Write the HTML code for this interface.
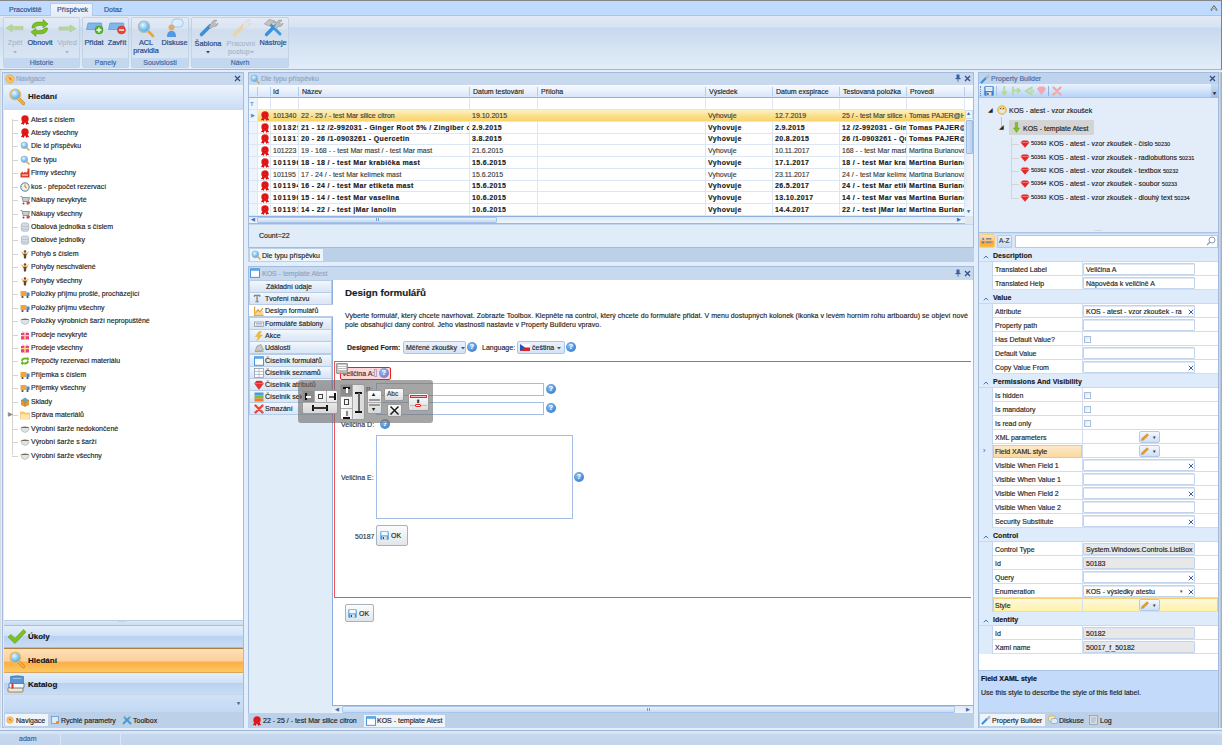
<!DOCTYPE html>
<html><head><meta charset="utf-8">
<style>
*{box-sizing:border-box;margin:0;padding:0}
html,body{width:1222px;height:745px;overflow:hidden}
body{position:relative;-webkit-text-stroke:0.15px currentColor;background:#e2eefb;font-family:"Liberation Sans",sans-serif;font-size:7px;color:#1e1e1e;line-height:1}
.a{position:absolute}
.t{position:absolute;white-space:nowrap}
.b{font-weight:bold}
/* ribbon */
#topline{left:0;top:0;width:1222px;height:1px;background:#878787}
#tabbar{left:0;top:1px;width:1222px;height:14px;background:linear-gradient(#c9d6e6 0,#bfdbff 1px,#bfdbff 100%)}
#ribline{left:0;top:15px;width:1222px;height:1px;background:#a9c6e6}
#ribbody{left:0;top:16px;width:1222px;height:53px;background:linear-gradient(#e1eaf5 0,#d7e3f1 11px,#c8d8ee 12px,#d4e2f2 30px,#e2edf9 53px)}
#ribbot{left:0;top:69px;width:1222px;height:1px;background:#9fb8cc}
.grp{position:absolute;top:17px;height:51px;border:1px solid #c3d3e6;border-radius:2px;background:linear-gradient(#e3ebf6 0,#dae5f3 10px,#d0dded 12px,#d9e5f3 41px)}
.grp .lbl{position:absolute;left:0;right:0;bottom:0;height:9px;background:#c3d7ef;color:#3e64a0;font-size:7px;text-align:center;line-height:9px}
.rb{position:absolute;color:#2a4a85;font-size:7.3px;text-align:center;white-space:nowrap;-webkit-text-stroke:0.2px currentColor}
.rb.dis{color:#a3b5cd;-webkit-text-stroke:0.1px currentColor}
/* panels */
.pnl{position:absolute;border:1px solid #a3bcdd;background:#e1ecf9}
.phdr{position:absolute;left:0;top:0;right:0;height:12px;background:#bacfe8;color:#8aa0bd;font-size:7px;line-height:12px}
</style></head><body>
<svg width="0" height="0" style="position:absolute"><defs>
<radialGradient id="glass" cx="0.4" cy="0.35" r="0.7"><stop offset="0" stop-color="#eaf7ff"/><stop offset="0.45" stop-color="#8fd0f6"/><stop offset="1" stop-color="#3d9ee0"/></radialGradient>
</defs></svg>
<div id="topline" class="a"></div>
<div id="tabbar" class="a"></div>
<div id="ribline" class="a"></div>
<div id="ribbody" class="a"></div>
<div id="ribbot" class="a"></div>
<div class="a" style="left:0;top:70px;width:1222px;height:2px;background:#e4edf8"></div>

<!-- ribbon tabs -->
<div class="a" style="left:50px;top:3px;width:43px;height:13px;border:1px solid #b2cbe8;border-bottom:none;border-radius:2px 2px 0 0;background:linear-gradient(#f3f7fc,#e3ebf6)"></div>
<div class="t" style="left:9px;top:6px;color:#2f4e86">Pracoviště</div>
<div class="t" style="left:57px;top:6px;color:#2f4e86">Příspěvek</div>
<div class="t" style="left:104px;top:6px;color:#2f4e86">Dotaz</div>

<!-- ribbon groups -->
<div class="grp" style="left:3px;width:77px"><div class="lbl">Historie</div></div>
<div class="grp" style="left:82px;width:47px"><div class="lbl">Panely</div></div>
<div class="grp" style="left:131px;width:58px"><div class="lbl">Souvislosti</div></div>
<div class="grp" style="left:191px;width:98px"><div class="lbl">Návrh</div></div>


<!-- ribbon icons -->
<svg class="a" style="left:0;top:15px" width="295" height="40" viewBox="0 15 295 40">
 <!-- Zpet arrow -->
 <path d="M6 28 L12 24.5 V26.6 H23 V29.6 H12 V31.8 Z" fill="#b8d69a" stroke="#a9cb86" stroke-width="0.6"/>
 <!-- Obnovit -->
 <path d="M32 28 C32 22 38 21.5 43 22.5 V19.5 L48 24 L43 28 V25.5 C39 25 36 25.5 34.5 28 Z" fill="#7dc21e" stroke="#5c9a10" stroke-width="0.6"/>
 <path d="M47.5 28 C47.5 34 41 34.5 36 33.5 V36.5 L31 32 L36 28.5 V30.5 C40 31 43.5 30.5 45 28 Z" fill="#7dc21e" stroke="#5c9a10" stroke-width="0.6"/>
 <!-- Vpred -->
 <path d="M76 28.5 L70 25 V27 H59 V30 H70 V32 Z" fill="#b8d69a" stroke="#a9cb86" stroke-width="0.6"/>
 <!-- Pridat -->
 <path d="M86.5 29.5 L88 23 H101.5 L102.5 29.5 Z" fill="#7fb7ea" stroke="#4f8fcf" stroke-width="0.6"/>
 <circle cx="99" cy="30" r="4" fill="#58b32a" stroke="#3f8d1c" stroke-width="0.5"/>
 <path d="M96.5 30 H101.5 M99 27.5 V32.5" stroke="#fff" stroke-width="1.4"/>
 <!-- Zavrit -->
 <path d="M108.5 29.5 L110 23 H123.5 L124.5 29.5 Z" fill="#7fb7ea" stroke="#4f8fcf" stroke-width="0.6"/>
 <circle cx="121.5" cy="30" r="4" fill="#e5453a" stroke="#b8302a" stroke-width="0.5"/>
 <path d="M119 30 H124" stroke="#fff" stroke-width="1.4"/>
 <!-- ACL magnifier -->
 <path d="M148 31 L153 36" stroke="#e8a33a" stroke-width="2.6" stroke-linecap="round"/>
 <circle cx="144" cy="26.7" r="5.6" fill="url(#glass)" stroke="#b9b9b9" stroke-width="1.4"/>
 <!-- Diskuse -->
 <rect x="172" y="19" width="11" height="8" rx="3.5" fill="#dbeeff" stroke="#8ab6de" stroke-width="0.7"/>
 <circle cx="171.5" cy="27.5" r="3" fill="#e4a970"/>
 <path d="M167 37 C167 32 169 31 171.5 31 C174 31 176 32 176 37 Z" fill="#4f9ae0"/>
 <!-- Sablona wrench -->
 <path d="M201.5 34.5 L210 26" stroke="#3f8fd8" stroke-width="3.6" stroke-linecap="round"/>
 <path d="M209 27 L212 22 C213 20 216 19.5 217 20.5 L214.5 22.5 L216 24.5 L218 23 C218 25 216 27 213.5 26.5 L210.5 28.5 Z" fill="#bdbdbd" stroke="#8a8a8a" stroke-width="0.5"/>
 <!-- Pracovni wrench disabled -->
 <path d="M234.5 34.5 L243 26" stroke="#e9d3ab" stroke-width="3.6" stroke-linecap="round"/>
 <path d="M242 27 L245 22 C246 20 249 19.5 250 20.5 L247.5 22.5 L249 24.5 L251 23 C251 25 249 27 246.5 26.5 L243.5 28.5 Z" fill="#e4e4e4" stroke="#cfcfcf" stroke-width="0.5"/>
 <!-- Nastroje -->
 <path d="M280 34 L271 25" stroke="#3f9ad8" stroke-width="3" stroke-linecap="round"/>
 <path d="M264.5 24 L269 19.5 L275 21 L276 23 L272 23 L269.5 26 Z" fill="#c4c4c4" stroke="#7a7a7a" stroke-width="0.5"/>
 <path d="M266.5 34.5 L275 26" stroke="#3f8fd8" stroke-width="3.4" stroke-linecap="round"/>
 <path d="M274 27 L277 22 C278 20 281 19.5 282 20.5 L279.5 22.5 L281 24.5 L283 23 C283 25 281 27 278.5 26.5 L275.5 28.5 Z" fill="#bdbdbd" stroke="#8a8a8a" stroke-width="0.5"/>
</svg>
<div class="rb dis" style="left:5px;top:39px;width:20px">Zpět</div>
<svg class="a" style="left:13px;top:51px" width="4" height="3" viewBox="0 0 4 3"><path d="M0 0 H4 L2 2.5 Z" fill="#a3b5cd"/></svg>
<div class="rb" style="left:26px;top:39px;width:28px">Obnovit</div>
<div class="rb dis" style="left:55px;top:39px;width:24px">Vpřed</div>
<svg class="a" style="left:65px;top:51px" width="4" height="3" viewBox="0 0 4 3"><path d="M0 0 H4 L2 2.5 Z" fill="#a3b5cd"/></svg>
<div class="rb" style="left:83px;top:39px;width:22px">Přidat</div>
<div class="rb" style="left:106px;top:39px;width:22px">Zavřít</div>
<div class="rb" style="left:134px;top:39px;width:24px">ACL</div>
<div class="rb" style="left:132px;top:47px;width:28px">pravidla</div>
<div class="rb" style="left:161px;top:39px;width:27px">Diskuse</div>
<div class="rb" style="left:194px;top:40px;width:28px">Šablona</div>
<svg class="a" style="left:206px;top:51px" width="4" height="3" viewBox="0 0 4 3"><path d="M0 0 H4 L2 2.5 Z" fill="#2a4a85"/></svg>
<div class="rb dis" style="left:226px;top:40px;width:30px">Pracovní</div>
<div class="rb dis" style="left:226px;top:48px;width:30px">postup&nbsp;&nbsp;</div><svg class="a" style="left:250px;top:51px" width="4" height="3" viewBox="0 0 4 3"><path d="M0 0 H4 L2 2.5 Z" fill="#a3b5cd"/></svg>
<div class="rb" style="left:258px;top:39px;width:30px">Nástroje</div>
<svg class="a" style="left:1210px;top:5px" width="8" height="7" viewBox="0 0 8 7"><path d="M1 5.5 L4 1.5 L7 5.5" stroke="#555" stroke-width="1.8" fill="none"/><path d="M1.3 5.3 L4 1.8 L6.7 5.3" stroke="#f4ecc8" stroke-width="0.8" fill="none"/></svg>
<div class="a" style="left:1221px;top:0;width:1px;height:70px;background:#7a828c"></div>

<!-- panels frames -->
<div class="pnl" id="navp" style="left:2px;top:72px;width:242px;height:656px"></div>
<div class="a" style="left:0;top:70px;width:1px;height:661px;background:#d6dce4"></div>
<div class="pnl" id="gridp" style="left:248px;top:72px;width:726px;height:176px"></div>
<div class="pnl" id="formp" style="left:248px;top:266px;width:726px;height:448px"></div>
<div class="pnl" id="propp" style="left:978px;top:72px;width:241px;height:656px"></div>


<!-- NAV PANEL -->
<div class="a" style="left:4px;top:73px;width:239px;height:12px;background:#c8d9ee"></div>
<svg class="a" style="left:5px;top:74px" width="10" height="10" viewBox="0 0 10 10"><circle cx="5" cy="5" r="4.2" fill="#f4c46a" stroke="#e3a43a" stroke-width="0.6"/><path d="M3 3 L7 7 L5.5 4.2 Z" fill="#d42020"/></svg>
<div class="t" style="left:16px;top:75px;color:#8ea5c3">Navigace</div>
<svg class="a" style="left:234px;top:75px" width="7" height="7" viewBox="0 0 7 7"><path d="M1 1 L6 6 M6 1 L1 6" stroke="#2f4e86" stroke-width="1.2"/></svg>
<div class="a" style="left:4px;top:85px;width:239px;height:25px;background:linear-gradient(#eef4fc,#dbe8f9 50%,#c8dcf7)"></div>
<svg class="a" style="left:8px;top:88px" width="18" height="18" viewBox="0 0 18 18"><path d="M10.5 10.5 L15.5 15.5" stroke="#c88a30" stroke-width="3.2" stroke-linecap="round"/><path d="M10.5 10.5 L15.5 15.5" stroke="#f4b040" stroke-width="2" stroke-linecap="round"/><circle cx="7.3" cy="6.5" r="5.3" fill="url(#glass)" stroke="#e8b860" stroke-width="1.4"/></svg>
<div class="t b" style="left:28px;top:93px;font-size:8px;color:#1a1a1a">Hledání</div>
<div class="a" style="left:4px;top:110px;width:239px;height:510px;background:#fff"></div>
<div class="a" style="left:12px;top:119px;width:1px;height:336px;background:#d4d4d4"></div>

<div class="a" style="left:12px;top:120px;width:6px;height:1px;background:#d4d4d4"></div>
<svg class="a" style="left:20px;top:115px" width="10" height="10" viewBox="0 0 10 10"><path d="M3 5.5 L0.8 9.3 L2.6 9 L3.6 10 L5 7 L6.4 10 L7.4 9 L9.2 9.3 L7 5.5 Z" fill="#d81212"/><circle cx="5" cy="4" r="3.7" fill="#e81c1c"/><circle cx="5" cy="4" r="2" fill="none" stroke="#c40e0e" stroke-width="0.7"/></svg>
<div class="t" style="left:31px;top:116px;color:#1e1e1e">Atest s číslem</div>
<div class="a" style="left:12px;top:133px;width:6px;height:1px;background:#d4d4d4"></div>
<svg class="a" style="left:20px;top:128px" width="10" height="10" viewBox="0 0 10 10"><path d="M3 5.5 L0.8 9.3 L2.6 9 L3.6 10 L5 7 L6.4 10 L7.4 9 L9.2 9.3 L7 5.5 Z" fill="#d81212"/><circle cx="5" cy="4" r="3.7" fill="#e81c1c"/><circle cx="5" cy="4" r="2" fill="none" stroke="#c40e0e" stroke-width="0.7"/></svg>
<div class="t" style="left:31px;top:129px;color:#1e1e1e">Atesty všechny</div>
<div class="a" style="left:12px;top:146px;width:6px;height:1px;background:#d4d4d4"></div>
<svg class="a" style="left:20px;top:141px" width="10" height="10" viewBox="0 0 10 10"><path d="M6 6 L9 9" stroke="#e8a33a" stroke-width="1.6" stroke-linecap="round"/><circle cx="4.3" cy="4.3" r="3.3" fill="url(#glass)" stroke="#a9b8c8" stroke-width="0.9"/></svg>
<div class="t" style="left:31px;top:142px;color:#1e1e1e">Dle id příspěvku</div>
<div class="a" style="left:12px;top:160px;width:6px;height:1px;background:#d4d4d4"></div>
<svg class="a" style="left:20px;top:155px" width="10" height="10" viewBox="0 0 10 10"><path d="M6 6 L9 9" stroke="#e8a33a" stroke-width="1.6" stroke-linecap="round"/><circle cx="4.3" cy="4.3" r="3.3" fill="url(#glass)" stroke="#a9b8c8" stroke-width="0.9"/></svg>
<div class="t" style="left:31px;top:156px;color:#1e1e1e">Dle typu</div>
<div class="a" style="left:12px;top:173px;width:6px;height:1px;background:#d4d4d4"></div>
<svg class="a" style="left:20px;top:168px" width="10" height="10" viewBox="0 0 10 10"><path d="M0.5 9.5 V5 L3 3.5 V5 L5.5 3.5 V5 L7.5 3.5 V0.5 H9.5 V9.5 Z" fill="#d8412c"/><rect x="2" y="6.5" width="6" height="1.2" fill="#fbd3c2"/></svg>
<div class="t" style="left:31px;top:169px;color:#1e1e1e">Firmy všechny</div>
<div class="a" style="left:12px;top:187px;width:6px;height:1px;background:#d4d4d4"></div>
<svg class="a" style="left:20px;top:182px" width="10" height="10" viewBox="0 0 10 10"><circle cx="5" cy="5" r="4.2" fill="#fff2c8" stroke="#3b7bc9" stroke-width="1"/><path d="M5 2.5 V5 L6.8 6" stroke="#555" stroke-width="0.7" fill="none"/></svg>
<div class="t" style="left:31px;top:183px;color:#1e1e1e">kos - přepočet rezervací</div>
<div class="a" style="left:12px;top:200px;width:6px;height:1px;background:#d4d4d4"></div>
<svg class="a" style="left:20px;top:195px" width="10" height="10" viewBox="0 0 10 10"><path d="M0.5 1.5 H2 L3 6.5 H8.5 L9.5 2.5 H2.5" fill="#c9cdd2" stroke="#777" stroke-width="0.7"/><circle cx="3.5" cy="8.5" r="1" fill="#555"/><circle cx="7.5" cy="8.5" r="1" fill="#555"/><circle cx="8.3" cy="7.8" r="1.6" fill="#e24b2a"/></svg>
<div class="t" style="left:31px;top:196px;color:#1e1e1e">Nákupy nevykryté</div>
<div class="a" style="left:12px;top:214px;width:6px;height:1px;background:#d4d4d4"></div>
<svg class="a" style="left:20px;top:209px" width="10" height="10" viewBox="0 0 10 10"><path d="M0.5 1.5 H2 L3 6.5 H8.5 L9.5 2.5 H2.5" fill="#c9cdd2" stroke="#777" stroke-width="0.7"/><circle cx="3.5" cy="8.5" r="1" fill="#555"/><circle cx="7.5" cy="8.5" r="1" fill="#555"/><circle cx="8.3" cy="7.8" r="1.6" fill="#e24b2a"/></svg>
<div class="t" style="left:31px;top:210px;color:#1e1e1e">Nákupy všechny</div>
<div class="a" style="left:12px;top:227px;width:6px;height:1px;background:#d4d4d4"></div>
<svg class="a" style="left:20px;top:222px" width="10" height="10" viewBox="0 0 10 10"><rect x="1.3" y="1" width="7.4" height="8.3" rx="2" fill="#d6dde6" stroke="#9aa6b3" stroke-width="0.6"/><path d="M1.5 4 Q5 5.5 8.5 4 M1.5 6.7 Q5 8.2 8.5 6.7" stroke="#9aa6b3" stroke-width="0.5" fill="none"/></svg>
<div class="t" style="left:31px;top:223px;color:#1e1e1e">Obalová jednotka s číslem</div>
<div class="a" style="left:12px;top:240px;width:6px;height:1px;background:#d4d4d4"></div>
<svg class="a" style="left:20px;top:235px" width="10" height="10" viewBox="0 0 10 10"><rect x="1.3" y="1" width="7.4" height="8.3" rx="2" fill="#d6dde6" stroke="#9aa6b3" stroke-width="0.6"/><path d="M1.5 4 Q5 5.5 8.5 4 M1.5 6.7 Q5 8.2 8.5 6.7" stroke="#9aa6b3" stroke-width="0.5" fill="none"/></svg>
<div class="t" style="left:31px;top:236px;color:#1e1e1e">Obalové jednotky</div>
<div class="a" style="left:12px;top:254px;width:6px;height:1px;background:#d4d4d4"></div>
<svg class="a" style="left:20px;top:249px" width="10" height="10" viewBox="0 0 10 10"><path d="M1 2 L4 4.5 L5 3.5 L6 4.5 L9 2 L7 6 H3 Z" fill="#e8a33a"/><path d="M3.5 5 H6.5 L6 9.5 H4 Z" fill="#5a4a35"/><circle cx="5" cy="2.5" r="1.3" fill="#6b5436"/></svg>
<div class="t" style="left:31px;top:250px;color:#1e1e1e">Pohyb s číslem</div>
<div class="a" style="left:12px;top:267px;width:6px;height:1px;background:#d4d4d4"></div>
<svg class="a" style="left:20px;top:262px" width="10" height="10" viewBox="0 0 10 10"><path d="M1 2 L4 4.5 L5 3.5 L6 4.5 L9 2 L7 6 H3 Z" fill="#e8a33a"/><path d="M3.5 5 H6.5 L6 9.5 H4 Z" fill="#5a4a35"/><circle cx="5" cy="2.5" r="1.3" fill="#6b5436"/></svg>
<div class="t" style="left:31px;top:263px;color:#1e1e1e">Pohyby neschválené</div>
<div class="a" style="left:12px;top:281px;width:6px;height:1px;background:#d4d4d4"></div>
<svg class="a" style="left:20px;top:276px" width="10" height="10" viewBox="0 0 10 10"><path d="M1 2 L4 4.5 L5 3.5 L6 4.5 L9 2 L7 6 H3 Z" fill="#e8a33a"/><path d="M3.5 5 H6.5 L6 9.5 H4 Z" fill="#5a4a35"/><circle cx="5" cy="2.5" r="1.3" fill="#6b5436"/></svg>
<div class="t" style="left:31px;top:277px;color:#1e1e1e">Pohyby všechny</div>
<div class="a" style="left:12px;top:294px;width:6px;height:1px;background:#d4d4d4"></div>
<svg class="a" style="left:20px;top:289px" width="10" height="10" viewBox="0 0 10 10"><rect x="0.5" y="2" width="6" height="5" fill="#f2a43a"/><rect x="6.5" y="3.5" width="3" height="3.5" fill="#3e8bd8"/><circle cx="2.5" cy="8" r="1.1" fill="#444"/><circle cx="7.5" cy="8" r="1.1" fill="#444"/></svg>
<div class="t" style="left:31px;top:290px;color:#1e1e1e">Položky příjmu prošlé, procházející</div>
<div class="a" style="left:12px;top:308px;width:6px;height:1px;background:#d4d4d4"></div>
<svg class="a" style="left:20px;top:303px" width="10" height="10" viewBox="0 0 10 10"><rect x="0.5" y="2" width="6" height="5" fill="#f2a43a"/><rect x="6.5" y="3.5" width="3" height="3.5" fill="#3e8bd8"/><circle cx="2.5" cy="8" r="1.1" fill="#444"/><circle cx="7.5" cy="8" r="1.1" fill="#444"/></svg>
<div class="t" style="left:31px;top:304px;color:#1e1e1e">Položky příjmu všechny</div>
<div class="a" style="left:12px;top:321px;width:6px;height:1px;background:#d4d4d4"></div>
<svg class="a" style="left:20px;top:316px" width="10" height="10" viewBox="0 0 10 10"><ellipse cx="5" cy="4" rx="4.2" ry="1.6" fill="#7d6a55"/><path d="M0.8 4 Q1 8 5 8.5 Q9 8 9.2 4" fill="#dfe3e8" stroke="#9aa2ab" stroke-width="0.5"/></svg>
<div class="t" style="left:31px;top:317px;color:#1e1e1e">Položky výrobních šarží nepropuštěné</div>
<div class="a" style="left:12px;top:335px;width:6px;height:1px;background:#d4d4d4"></div>
<svg class="a" style="left:20px;top:330px" width="10" height="10" viewBox="0 0 10 10"><rect x="1" y="3" width="8" height="6.5" fill="#e83e8c"/><rect x="4.3" y="3" width="1.4" height="6.5" fill="#ffe27a"/><rect x="1" y="5" width="8" height="1.2" fill="#ffe27a"/><path d="M5 3 Q2 0 2 2.5 Q3 3 5 3 Q8 0 8 2.5 Q7 3 5 3" fill="#f7b3d3"/></svg>
<div class="t" style="left:31px;top:331px;color:#1e1e1e">Prodeje nevykryté</div>
<div class="a" style="left:12px;top:348px;width:6px;height:1px;background:#d4d4d4"></div>
<svg class="a" style="left:20px;top:343px" width="10" height="10" viewBox="0 0 10 10"><rect x="1" y="3" width="8" height="6.5" fill="#e83e8c"/><rect x="4.3" y="3" width="1.4" height="6.5" fill="#ffe27a"/><rect x="1" y="5" width="8" height="1.2" fill="#ffe27a"/><path d="M5 3 Q2 0 2 2.5 Q3 3 5 3 Q8 0 8 2.5 Q7 3 5 3" fill="#f7b3d3"/></svg>
<div class="t" style="left:31px;top:344px;color:#1e1e1e">Prodeje všechny</div>
<div class="a" style="left:12px;top:361px;width:6px;height:1px;background:#d4d4d4"></div>
<svg class="a" style="left:20px;top:356px" width="10" height="10" viewBox="0 0 10 10"><path d="M1 5 C1 1.5 5 1 7 2 V0.5 L9.5 3 L7 5 V3.8 C5 3.3 3 3.8 2.5 5.5 Z" fill="#6cb82a"/><path d="M9 5 C9 8.5 5 9 3 8 V9.5 L0.5 7 L3 5 V6.2 C5 6.7 7 6.2 7.5 4.5 Z" fill="#6cb82a"/></svg>
<div class="t" style="left:31px;top:357px;color:#1e1e1e">Přepočty rezervací materiálu</div>
<div class="a" style="left:12px;top:375px;width:6px;height:1px;background:#d4d4d4"></div>
<svg class="a" style="left:20px;top:370px" width="10" height="10" viewBox="0 0 10 10"><rect x="0.5" y="2" width="6" height="5" fill="#f2a43a"/><rect x="6.5" y="3.5" width="3" height="3.5" fill="#3e8bd8"/><circle cx="2.5" cy="8" r="1.1" fill="#444"/><circle cx="7.5" cy="8" r="1.1" fill="#444"/></svg>
<div class="t" style="left:31px;top:371px;color:#1e1e1e">Příjemka s číslem</div>
<div class="a" style="left:12px;top:388px;width:6px;height:1px;background:#d4d4d4"></div>
<svg class="a" style="left:20px;top:383px" width="10" height="10" viewBox="0 0 10 10"><rect x="0.5" y="2" width="6" height="5" fill="#f2a43a"/><rect x="6.5" y="3.5" width="3" height="3.5" fill="#3e8bd8"/><circle cx="2.5" cy="8" r="1.1" fill="#444"/><circle cx="7.5" cy="8" r="1.1" fill="#444"/></svg>
<div class="t" style="left:31px;top:384px;color:#1e1e1e">Příjemky všechny</div>
<div class="a" style="left:12px;top:402px;width:6px;height:1px;background:#d4d4d4"></div>
<svg class="a" style="left:20px;top:397px" width="10" height="10" viewBox="0 0 10 10"><path d="M1 3 L5 1 L9 3 V8 L5 9.8 L1 8 Z" fill="#d89a3a"/><path d="M1 3 L5 5 L9 3 M5 5 V9.8" stroke="#a86a1a" stroke-width="0.5" fill="none"/><circle cx="5" cy="2.8" r="2" fill="#5aa6e0"/></svg>
<div class="t" style="left:31px;top:398px;color:#1e1e1e">Sklady</div>
<div class="a" style="left:12px;top:415px;width:6px;height:1px;background:#d4d4d4"></div>
<svg class="a" style="left:20px;top:410px" width="10" height="10" viewBox="0 0 10 10"><path d="M0.5 2 H4 L5 3 H9.5 V9 H0.5 Z" fill="#f7d27a" stroke="#d8a83a" stroke-width="0.5"/><path d="M0.5 4.5 H9.5 V9 H0.5 Z" fill="#fde6a8"/></svg>
<div class="t" style="left:31px;top:411px;color:#1e1e1e">Správa materiálů</div>
<div class="a" style="left:12px;top:429px;width:6px;height:1px;background:#d4d4d4"></div>
<svg class="a" style="left:20px;top:424px" width="10" height="10" viewBox="0 0 10 10"><ellipse cx="5" cy="4" rx="4.2" ry="1.6" fill="#7d6a55"/><path d="M0.8 4 Q1 8 5 8.5 Q9 8 9.2 4" fill="#dfe3e8" stroke="#9aa2ab" stroke-width="0.5"/></svg>
<div class="t" style="left:31px;top:425px;color:#1e1e1e">Výrobní šarže nedokončené</div>
<div class="a" style="left:12px;top:442px;width:6px;height:1px;background:#d4d4d4"></div>
<svg class="a" style="left:20px;top:437px" width="10" height="10" viewBox="0 0 10 10"><ellipse cx="5" cy="4" rx="4.2" ry="1.6" fill="#7d6a55"/><path d="M0.8 4 Q1 8 5 8.5 Q9 8 9.2 4" fill="#dfe3e8" stroke="#9aa2ab" stroke-width="0.5"/></svg>
<div class="t" style="left:31px;top:438px;color:#1e1e1e">Výrobní šarže s šarží</div>
<div class="a" style="left:12px;top:456px;width:6px;height:1px;background:#d4d4d4"></div>
<svg class="a" style="left:20px;top:451px" width="10" height="10" viewBox="0 0 10 10"><ellipse cx="5" cy="4" rx="4.2" ry="1.6" fill="#7d6a55"/><path d="M0.8 4 Q1 8 5 8.5 Q9 8 9.2 4" fill="#dfe3e8" stroke="#9aa2ab" stroke-width="0.5"/></svg>
<div class="t" style="left:31px;top:452px;color:#1e1e1e">Výrobní šarže všechny</div>
<div class="t" style="left:8px;top:411px;color:#888;font-size:6px">▶</div>

<div class="a" style="left:4px;top:620px;width:239px;height:6px;background:linear-gradient(#dce8f6,#cddcef);border-top:1px solid #b8cde6;border-bottom:1px solid #a8c0df"></div>
<div class="t" style="left:118px;top:619px;color:#7f98b8;font-size:5px;letter-spacing:0.5px">····</div>
<div class="a" style="left:4px;top:626px;width:239px;height:22px;background:linear-gradient(#e3eefb 0,#d1e2f7 45%,#b9d2f1 50%,#c9ddf5 100%);border-bottom:1px solid #a0bde0"></div>
<div class="a" style="left:4px;top:648px;width:239px;height:25px;background:linear-gradient(#fde0b8 0,#fcd09a 52%,#fcae4c 58%,#fdc95c 100%);border-top:1px solid #b08040;border-bottom:1px solid #d8a860"></div>
<div class="a" style="left:4px;top:673px;width:239px;height:22px;background:linear-gradient(#e3eefb 0,#d1e2f7 45%,#b9d2f1 50%,#c9ddf5 100%);border-bottom:1px solid #c6d6ea"></div>
<div class="a" style="left:4px;top:695px;width:239px;height:17px;background:linear-gradient(#d0e2f8,#c2d8f3)"></div>
<div class="t" style="left:236px;top:701px;color:#3a5e9a;font-size:5px">▼</div>
<svg class="a" style="left:7px;top:628px" width="20" height="18" viewBox="0 0 20 18"><path d="M1 9 L4 6.5 L8 10.5 L16.5 1.5 L19 4 L8 15.5 Z" fill="#7cc21c" stroke="#5a9a10" stroke-width="0.6"/></svg>
<div class="t b" style="left:28px;top:633px;font-size:8px;color:#111">Úkoly</div>
<svg class="a" style="left:8px;top:651px" width="18" height="18" viewBox="0 0 18 18"><path d="M10.5 10.5 L15.5 15.5" stroke="#c88a30" stroke-width="3.2" stroke-linecap="round"/><path d="M10.5 10.5 L15.5 15.5" stroke="#f4b040" stroke-width="2" stroke-linecap="round"/><circle cx="7.3" cy="6.5" r="5.2" fill="url(#glass)" stroke="#e8b860" stroke-width="1.4"/></svg>
<div class="t b" style="left:28px;top:657px;font-size:8px;color:#111">Hledání</div>
<svg class="a" style="left:7px;top:675px" width="20" height="19" viewBox="0 0 20 19"><rect x="1" y="12.5" width="15" height="4.5" rx="1" fill="#f6e6c4" stroke="#9a6a30" stroke-width="0.8"/><rect x="2" y="8" width="15" height="5" rx="1" fill="#f4f8fb" stroke="#3a6aa8" stroke-width="0.8"/><path d="M3.5 1.5 Q10 0.2 16.5 1.5 V8.5 H3.5 Z" fill="#5a96cf" stroke="#3a6aa0" stroke-width="0.6"/><rect x="6" y="3" width="8" height="1" fill="#9cc4ea"/><rect x="4.5" y="8.5" width="2" height="5" fill="#e03030"/></svg>
<div class="t b" style="left:28px;top:681px;font-size:8px;color:#111">Katalog</div>
<div class="a" style="left:4px;top:712px;width:239px;height:16px;background:#bcd0e8"></div>
<div class="a" style="left:5px;top:714px;width:43px;height:12px;background:#eef4fb"></div>
<svg class="a" style="left:6px;top:716px" width="8" height="8" viewBox="0 0 10 10"><circle cx="5" cy="5" r="4.2" fill="#f4c46a" stroke="#e3a43a" stroke-width="0.6"/><path d="M3 3 L7 7 L5.5 4.2 Z" fill="#d42020"/></svg>
<div class="t" style="left:16px;top:717px;color:#1e1e1e">Navigace</div>
<svg class="a" style="left:51px;top:716px" width="8" height="8" viewBox="0 0 10 10"><rect x="0.5" y="0.5" width="9" height="9" fill="#dbeaf7" stroke="#4a8ac8" stroke-width="0.8"/><circle cx="8" cy="8" r="1.8" fill="#f08a20"/></svg>
<div class="t" style="left:61px;top:717px;color:#1e1e1e">Rychlé parametry</div>
<svg class="a" style="left:122px;top:715px" width="10" height="10" viewBox="0 0 10 10"><path d="M1 9 L8 2 M2 2 L9 9" stroke="#3f9ad8" stroke-width="1.8"/><path d="M1 2 L3 0.5 L4 2 L2 3.5Z M7 1 L9 1.5 L8.5 3.5 L7 3 Z" fill="#aaa"/></svg>
<div class="t" style="left:133px;top:717px;color:#1e1e1e">Toolbox</div>


<!-- GRID PANEL -->
<div class="a" style="left:249px;top:73px;width:724px;height:12px;background:#c8d9ee"></div>
<svg class="a" style="left:250px;top:74px" width="10" height="10" viewBox="0 0 10 10"><path d="M6 6 L9 9" stroke="#e8a33a" stroke-width="1.6" stroke-linecap="round"/><circle cx="4.3" cy="4.3" r="3.4" fill="url(#glass)" stroke="#a9b8c8" stroke-width="0.9"/></svg>
<div class="t" style="left:261px;top:75px;color:#8ea5c3">Dle typu příspěvku</div>
<svg class="a" style="left:955px;top:74px" width="6" height="8" viewBox="0 0 6 8"><rect x="1.5" y="0.5" width="3" height="3.5" fill="#3d5f9e"/><rect x="0.5" y="4" width="5" height="1.2" fill="#3d5f9e"/><path d="M3 5 V7.8" stroke="#3d5f9e" stroke-width="0.8"/></svg>
<svg class="a" style="left:964px;top:75px" width="7" height="7" viewBox="0 0 7 7"><path d="M1 1 L6 6 M6 1 L1 6" stroke="#2f4e86" stroke-width="1.2"/></svg>
<div class="a" style="left:249px;top:85px;width:724px;height:131px;background:#fff"></div>
<div class="a" style="left:249px;top:85px;width:724px;height:13px;background:linear-gradient(#f7fafe,#e9f1fb 50%,#d6e5f8);border-bottom:1px solid #8eb2e0"></div>

<div class="a" style="left:257px;top:87px;width:1px;height:9px;background:#b4cdec"></div>
<div class="a" style="left:270px;top:87px;width:1px;height:9px;background:#b4cdec"></div>
<div class="a" style="left:298px;top:87px;width:1px;height:9px;background:#b4cdec"></div>
<div class="t" style="left:273px;top:88px;color:#1e1e1e">Id</div>
<div class="a" style="left:469px;top:87px;width:1px;height:9px;background:#b4cdec"></div>
<div class="t" style="left:302px;top:88px;color:#1e1e1e">Název</div>
<div class="a" style="left:537px;top:87px;width:1px;height:9px;background:#b4cdec"></div>
<div class="t" style="left:473px;top:88px;color:#1e1e1e">Datum testování</div>
<div class="a" style="left:705px;top:87px;width:1px;height:9px;background:#b4cdec"></div>
<div class="t" style="left:541px;top:88px;color:#1e1e1e">Příloha</div>
<div class="a" style="left:772px;top:87px;width:1px;height:9px;background:#b4cdec"></div>
<div class="t" style="left:709px;top:88px;color:#1e1e1e">Výsledek</div>
<div class="a" style="left:839px;top:87px;width:1px;height:9px;background:#b4cdec"></div>
<div class="t" style="left:776px;top:88px;color:#1e1e1e">Datum exspirace</div>
<div class="a" style="left:906px;top:87px;width:1px;height:9px;background:#b4cdec"></div>
<div class="t" style="left:843px;top:88px;color:#1e1e1e">Testovaná položka</div>
<div class="a" style="left:964px;top:87px;width:1px;height:9px;background:#b4cdec"></div>
<div class="t" style="left:910px;top:88px;color:#1e1e1e">Provedl</div>
<div class="a" style="left:249px;top:98px;width:8px;height:118px;background:#eef4fc"></div>
<div class="t" style="left:250px;top:101px;color:#5a8ac8;font-size:6px">T</div>
<div class="a" style="left:257px;top:98px;width:1px;height:118px;background:#dde7f3"></div>
<div class="a" style="left:270px;top:98px;width:1px;height:118px;background:#dde7f3"></div>
<div class="a" style="left:298px;top:98px;width:1px;height:118px;background:#dde7f3"></div>
<div class="a" style="left:469px;top:98px;width:1px;height:118px;background:#dde7f3"></div>
<div class="a" style="left:537px;top:98px;width:1px;height:118px;background:#dde7f3"></div>
<div class="a" style="left:705px;top:98px;width:1px;height:118px;background:#dde7f3"></div>
<div class="a" style="left:772px;top:98px;width:1px;height:118px;background:#dde7f3"></div>
<div class="a" style="left:839px;top:98px;width:1px;height:118px;background:#dde7f3"></div>
<div class="a" style="left:906px;top:98px;width:1px;height:118px;background:#dde7f3"></div>
<div class="a" style="left:964px;top:98px;width:1px;height:118px;background:#dde7f3"></div>
<div class="a" style="left:249px;top:109px;width:716px;height:1px;background:#dde7f3"></div>
<div class="a" style="left:258px;top:110px;width:707px;height:11px;background:linear-gradient(#fdf0c4,#fbe08e 50%,#f9d46a)"></div>
<div class="t" style="left:251px;top:113px;color:#5a8ac8;font-size:5px">▶</div>
<div class="a" style="left:249px;top:121px;width:716px;height:1px;background:#dde7f3"></div>
<svg class="a" style="left:260px;top:111px" width="10" height="10" viewBox="0 0 10 10"><path d="M3 5.5 L0.8 9.3 L2.6 9 L3.6 10 L5 7 L6.4 10 L7.4 9 L9.2 9.3 L7 5.5 Z" fill="#d81212"/><circle cx="5" cy="4" r="3.7" fill="#e81c1c"/><circle cx="5" cy="4" r="2" fill="none" stroke="#c40e0e" stroke-width="0.7"/></svg>
<div class="a" style="left:273px;top:112px;width:25px;height:9px;overflow:hidden;white-space:nowrap;color:#404040;">101340</div>
<div class="a" style="left:301px;top:112px;width:168px;height:9px;overflow:hidden;white-space:nowrap;color:#404040;">22 - 25 / - test Mar silice citron</div>
<div class="a" style="left:472px;top:112px;width:65px;height:9px;overflow:hidden;white-space:nowrap;color:#404040;">19.10.2015</div>
<div class="a" style="left:708px;top:112px;width:64px;height:9px;overflow:hidden;white-space:nowrap;color:#404040;">Vyhovuje</div>
<div class="a" style="left:775px;top:112px;width:64px;height:9px;overflow:hidden;white-space:nowrap;color:#404040;">12.7.2019</div>
<div class="a" style="left:842px;top:112px;width:64px;height:9px;overflow:hidden;white-space:nowrap;color:#404040;">25 / - test Mar silice citron</div>
<div class="a" style="left:909px;top:112px;width:55px;height:9px;overflow:hidden;white-space:nowrap;color:#404040;">Tomas PAJER@Hutnictví</div>
<div class="a" style="left:249px;top:133px;width:716px;height:1px;background:#dde7f3"></div>
<svg class="a" style="left:260px;top:123px" width="10" height="10" viewBox="0 0 10 10"><path d="M3 5.5 L0.8 9.3 L2.6 9 L3.6 10 L5 7 L6.4 10 L7.4 9 L9.2 9.3 L7 5.5 Z" fill="#d81212"/><circle cx="5" cy="4" r="3.7" fill="#e81c1c"/><circle cx="5" cy="4" r="2" fill="none" stroke="#c40e0e" stroke-width="0.7"/></svg>
<div class="a" style="left:273px;top:124px;width:25px;height:9px;overflow:hidden;white-space:nowrap;color:#1a1a1a;font-weight:bold;letter-spacing:0.9px;">101329</div>
<div class="a" style="left:301px;top:124px;width:168px;height:9px;overflow:hidden;white-space:nowrap;color:#1a1a1a;font-weight:bold;letter-spacing:0.35px;">21 - 12 /2-992031 - Ginger Root 5% / Zingiber officinale</div>
<div class="a" style="left:472px;top:124px;width:65px;height:9px;overflow:hidden;white-space:nowrap;color:#1a1a1a;font-weight:bold;letter-spacing:0.35px;">2.9.2015</div>
<div class="a" style="left:708px;top:124px;width:64px;height:9px;overflow:hidden;white-space:nowrap;color:#1a1a1a;font-weight:bold;letter-spacing:0.35px;">Vyhovuje</div>
<div class="a" style="left:775px;top:124px;width:64px;height:9px;overflow:hidden;white-space:nowrap;color:#1a1a1a;font-weight:bold;letter-spacing:0.35px;">2.9.2015</div>
<div class="a" style="left:842px;top:124px;width:64px;height:9px;overflow:hidden;white-space:nowrap;color:#1a1a1a;font-weight:bold;letter-spacing:0.35px;">12 /2-992031 - Ginger</div>
<div class="a" style="left:909px;top:124px;width:55px;height:9px;overflow:hidden;white-space:nowrap;color:#1a1a1a;font-weight:bold;letter-spacing:0.35px;">Tomas PAJER@Hutnictví</div>
<div class="a" style="left:249px;top:144px;width:716px;height:1px;background:#dde7f3"></div>
<svg class="a" style="left:260px;top:134px" width="10" height="10" viewBox="0 0 10 10"><path d="M3 5.5 L0.8 9.3 L2.6 9 L3.6 10 L5 7 L6.4 10 L7.4 9 L9.2 9.3 L7 5.5 Z" fill="#d81212"/><circle cx="5" cy="4" r="3.7" fill="#e81c1c"/><circle cx="5" cy="4" r="2" fill="none" stroke="#c40e0e" stroke-width="0.7"/></svg>
<div class="a" style="left:273px;top:135px;width:25px;height:9px;overflow:hidden;white-space:nowrap;color:#1a1a1a;font-weight:bold;letter-spacing:0.9px;">101317</div>
<div class="a" style="left:301px;top:135px;width:168px;height:9px;overflow:hidden;white-space:nowrap;color:#1a1a1a;font-weight:bold;letter-spacing:0.35px;">20 - 26 /1-0903261 - Quercetin</div>
<div class="a" style="left:472px;top:135px;width:65px;height:9px;overflow:hidden;white-space:nowrap;color:#1a1a1a;font-weight:bold;letter-spacing:0.35px;">3.8.2015</div>
<div class="a" style="left:708px;top:135px;width:64px;height:9px;overflow:hidden;white-space:nowrap;color:#1a1a1a;font-weight:bold;letter-spacing:0.35px;">Vyhovuje</div>
<div class="a" style="left:775px;top:135px;width:64px;height:9px;overflow:hidden;white-space:nowrap;color:#1a1a1a;font-weight:bold;letter-spacing:0.35px;">20.8.2015</div>
<div class="a" style="left:842px;top:135px;width:64px;height:9px;overflow:hidden;white-space:nowrap;color:#1a1a1a;font-weight:bold;letter-spacing:0.35px;">26 /1-0903261 - Quercetin</div>
<div class="a" style="left:909px;top:135px;width:55px;height:9px;overflow:hidden;white-space:nowrap;color:#1a1a1a;font-weight:bold;letter-spacing:0.35px;">Tomas PAJER@Hutnictví</div>
<div class="a" style="left:249px;top:156px;width:716px;height:1px;background:#dde7f3"></div>
<svg class="a" style="left:260px;top:146px" width="10" height="10" viewBox="0 0 10 10"><path d="M3 5.5 L0.8 9.3 L2.6 9 L3.6 10 L5 7 L6.4 10 L7.4 9 L9.2 9.3 L7 5.5 Z" fill="#d81212"/><circle cx="5" cy="4" r="3.7" fill="#e81c1c"/><circle cx="5" cy="4" r="2" fill="none" stroke="#c40e0e" stroke-width="0.7"/></svg>
<div class="a" style="left:273px;top:147px;width:25px;height:9px;overflow:hidden;white-space:nowrap;color:#404040;">101223</div>
<div class="a" style="left:301px;top:147px;width:168px;height:9px;overflow:hidden;white-space:nowrap;color:#404040;">19 - 168 -  - test Mar mast / - test Mar mast</div>
<div class="a" style="left:472px;top:147px;width:65px;height:9px;overflow:hidden;white-space:nowrap;color:#404040;">21.6.2015</div>
<div class="a" style="left:708px;top:147px;width:64px;height:9px;overflow:hidden;white-space:nowrap;color:#404040;">Vyhovuje</div>
<div class="a" style="left:775px;top:147px;width:64px;height:9px;overflow:hidden;white-space:nowrap;color:#404040;">10.11.2017</div>
<div class="a" style="left:842px;top:147px;width:64px;height:9px;overflow:hidden;white-space:nowrap;color:#404040;">168 -  - test Mar mast</div>
<div class="a" style="left:909px;top:147px;width:55px;height:9px;overflow:hidden;white-space:nowrap;color:#404040;">Martina  Burianová</div>
<div class="a" style="left:249px;top:168px;width:716px;height:1px;background:#dde7f3"></div>
<svg class="a" style="left:260px;top:158px" width="10" height="10" viewBox="0 0 10 10"><path d="M3 5.5 L0.8 9.3 L2.6 9 L3.6 10 L5 7 L6.4 10 L7.4 9 L9.2 9.3 L7 5.5 Z" fill="#d81212"/><circle cx="5" cy="4" r="3.7" fill="#e81c1c"/><circle cx="5" cy="4" r="2" fill="none" stroke="#c40e0e" stroke-width="0.7"/></svg>
<div class="a" style="left:273px;top:159px;width:25px;height:9px;overflow:hidden;white-space:nowrap;color:#1a1a1a;font-weight:bold;letter-spacing:0.9px;">101196</div>
<div class="a" style="left:301px;top:159px;width:168px;height:9px;overflow:hidden;white-space:nowrap;color:#1a1a1a;font-weight:bold;letter-spacing:0.35px;">18 - 18 / - test Mar krabička mast</div>
<div class="a" style="left:472px;top:159px;width:65px;height:9px;overflow:hidden;white-space:nowrap;color:#1a1a1a;font-weight:bold;letter-spacing:0.35px;">15.6.2015</div>
<div class="a" style="left:708px;top:159px;width:64px;height:9px;overflow:hidden;white-space:nowrap;color:#1a1a1a;font-weight:bold;letter-spacing:0.35px;">Vyhovuje</div>
<div class="a" style="left:775px;top:159px;width:64px;height:9px;overflow:hidden;white-space:nowrap;color:#1a1a1a;font-weight:bold;letter-spacing:0.35px;">17.1.2017</div>
<div class="a" style="left:842px;top:159px;width:64px;height:9px;overflow:hidden;white-space:nowrap;color:#1a1a1a;font-weight:bold;letter-spacing:0.35px;">18 / - test Mar krabička</div>
<div class="a" style="left:909px;top:159px;width:55px;height:9px;overflow:hidden;white-space:nowrap;color:#1a1a1a;font-weight:bold;letter-spacing:0.35px;">Martina  Burianová</div>
<div class="a" style="left:249px;top:180px;width:716px;height:1px;background:#dde7f3"></div>
<svg class="a" style="left:260px;top:170px" width="10" height="10" viewBox="0 0 10 10"><path d="M3 5.5 L0.8 9.3 L2.6 9 L3.6 10 L5 7 L6.4 10 L7.4 9 L9.2 9.3 L7 5.5 Z" fill="#d81212"/><circle cx="5" cy="4" r="3.7" fill="#e81c1c"/><circle cx="5" cy="4" r="2" fill="none" stroke="#c40e0e" stroke-width="0.7"/></svg>
<div class="a" style="left:273px;top:171px;width:25px;height:9px;overflow:hidden;white-space:nowrap;color:#404040;">101195</div>
<div class="a" style="left:301px;top:171px;width:168px;height:9px;overflow:hidden;white-space:nowrap;color:#404040;">17 - 24 / - test Mar kelímek mast</div>
<div class="a" style="left:472px;top:171px;width:65px;height:9px;overflow:hidden;white-space:nowrap;color:#404040;">15.6.2015</div>
<div class="a" style="left:708px;top:171px;width:64px;height:9px;overflow:hidden;white-space:nowrap;color:#404040;">Vyhovuje</div>
<div class="a" style="left:775px;top:171px;width:64px;height:9px;overflow:hidden;white-space:nowrap;color:#404040;">23.11.2017</div>
<div class="a" style="left:842px;top:171px;width:64px;height:9px;overflow:hidden;white-space:nowrap;color:#404040;">24 / - test Mar kelímek</div>
<div class="a" style="left:909px;top:171px;width:55px;height:9px;overflow:hidden;white-space:nowrap;color:#404040;">Martina  Burianová</div>
<div class="a" style="left:249px;top:191px;width:716px;height:1px;background:#dde7f3"></div>
<svg class="a" style="left:260px;top:181px" width="10" height="10" viewBox="0 0 10 10"><path d="M3 5.5 L0.8 9.3 L2.6 9 L3.6 10 L5 7 L6.4 10 L7.4 9 L9.2 9.3 L7 5.5 Z" fill="#d81212"/><circle cx="5" cy="4" r="3.7" fill="#e81c1c"/><circle cx="5" cy="4" r="2" fill="none" stroke="#c40e0e" stroke-width="0.7"/></svg>
<div class="a" style="left:273px;top:182px;width:25px;height:9px;overflow:hidden;white-space:nowrap;color:#1a1a1a;font-weight:bold;letter-spacing:0.9px;">101194</div>
<div class="a" style="left:301px;top:182px;width:168px;height:9px;overflow:hidden;white-space:nowrap;color:#1a1a1a;font-weight:bold;letter-spacing:0.35px;">16 - 24 / - test Mar etiketa mast</div>
<div class="a" style="left:472px;top:182px;width:65px;height:9px;overflow:hidden;white-space:nowrap;color:#1a1a1a;font-weight:bold;letter-spacing:0.35px;">15.6.2015</div>
<div class="a" style="left:708px;top:182px;width:64px;height:9px;overflow:hidden;white-space:nowrap;color:#1a1a1a;font-weight:bold;letter-spacing:0.35px;">Vyhovuje</div>
<div class="a" style="left:775px;top:182px;width:64px;height:9px;overflow:hidden;white-space:nowrap;color:#1a1a1a;font-weight:bold;letter-spacing:0.35px;">26.5.2017</div>
<div class="a" style="left:842px;top:182px;width:64px;height:9px;overflow:hidden;white-space:nowrap;color:#1a1a1a;font-weight:bold;letter-spacing:0.35px;">24 / - test Mar etiketa</div>
<div class="a" style="left:909px;top:182px;width:55px;height:9px;overflow:hidden;white-space:nowrap;color:#1a1a1a;font-weight:bold;letter-spacing:0.35px;">Martina  Burianová</div>
<div class="a" style="left:249px;top:203px;width:716px;height:1px;background:#dde7f3"></div>
<svg class="a" style="left:260px;top:193px" width="10" height="10" viewBox="0 0 10 10"><path d="M3 5.5 L0.8 9.3 L2.6 9 L3.6 10 L5 7 L6.4 10 L7.4 9 L9.2 9.3 L7 5.5 Z" fill="#d81212"/><circle cx="5" cy="4" r="3.7" fill="#e81c1c"/><circle cx="5" cy="4" r="2" fill="none" stroke="#c40e0e" stroke-width="0.7"/></svg>
<div class="a" style="left:273px;top:194px;width:25px;height:9px;overflow:hidden;white-space:nowrap;color:#1a1a1a;font-weight:bold;letter-spacing:0.9px;">101190</div>
<div class="a" style="left:301px;top:194px;width:168px;height:9px;overflow:hidden;white-space:nowrap;color:#1a1a1a;font-weight:bold;letter-spacing:0.35px;">15 - 14 / - test Mar vaselina</div>
<div class="a" style="left:472px;top:194px;width:65px;height:9px;overflow:hidden;white-space:nowrap;color:#1a1a1a;font-weight:bold;letter-spacing:0.35px;">10.6.2015</div>
<div class="a" style="left:708px;top:194px;width:64px;height:9px;overflow:hidden;white-space:nowrap;color:#1a1a1a;font-weight:bold;letter-spacing:0.35px;">Vyhovuje</div>
<div class="a" style="left:775px;top:194px;width:64px;height:9px;overflow:hidden;white-space:nowrap;color:#1a1a1a;font-weight:bold;letter-spacing:0.35px;">13.10.2017</div>
<div class="a" style="left:842px;top:194px;width:64px;height:9px;overflow:hidden;white-space:nowrap;color:#1a1a1a;font-weight:bold;letter-spacing:0.35px;">14 / - test Mar vaselina</div>
<div class="a" style="left:909px;top:194px;width:55px;height:9px;overflow:hidden;white-space:nowrap;color:#1a1a1a;font-weight:bold;letter-spacing:0.35px;">Martina  Burianová</div>
<div class="a" style="left:249px;top:215px;width:716px;height:1px;background:#dde7f3"></div>
<svg class="a" style="left:260px;top:205px" width="10" height="10" viewBox="0 0 10 10"><path d="M3 5.5 L0.8 9.3 L2.6 9 L3.6 10 L5 7 L6.4 10 L7.4 9 L9.2 9.3 L7 5.5 Z" fill="#d81212"/><circle cx="5" cy="4" r="3.7" fill="#e81c1c"/><circle cx="5" cy="4" r="2" fill="none" stroke="#c40e0e" stroke-width="0.7"/></svg>
<div class="a" style="left:273px;top:206px;width:25px;height:9px;overflow:hidden;white-space:nowrap;color:#1a1a1a;font-weight:bold;letter-spacing:0.9px;">101191</div>
<div class="a" style="left:301px;top:206px;width:168px;height:9px;overflow:hidden;white-space:nowrap;color:#1a1a1a;font-weight:bold;letter-spacing:0.35px;">14 - 22 / - test |Mar lanolin</div>
<div class="a" style="left:472px;top:206px;width:65px;height:9px;overflow:hidden;white-space:nowrap;color:#1a1a1a;font-weight:bold;letter-spacing:0.35px;">10.6.2015</div>
<div class="a" style="left:708px;top:206px;width:64px;height:9px;overflow:hidden;white-space:nowrap;color:#1a1a1a;font-weight:bold;letter-spacing:0.35px;">Vyhovuje</div>
<div class="a" style="left:775px;top:206px;width:64px;height:9px;overflow:hidden;white-space:nowrap;color:#1a1a1a;font-weight:bold;letter-spacing:0.35px;">14.4.2017</div>
<div class="a" style="left:842px;top:206px;width:64px;height:9px;overflow:hidden;white-space:nowrap;color:#1a1a1a;font-weight:bold;letter-spacing:0.35px;">22 / - test |Mar lanolin</div>
<div class="a" style="left:909px;top:206px;width:55px;height:9px;overflow:hidden;white-space:nowrap;color:#1a1a1a;font-weight:bold;letter-spacing:0.35px;">Martina  Burianová</div>

<div class="a" style="left:965px;top:110px;width:8px;height:106px;background:linear-gradient(90deg,#e3ecf7,#f3f7fc)"></div>
<div class="a" style="left:965px;top:110px;width:8px;height:9px;background:#eef4fb;border:1px solid #c9d9ee"></div>
<div class="t" style="left:966px;top:111px;color:#3a6ab0;font-size:5px">▲</div>
<div class="a" style="left:966px;top:120px;width:7px;height:34px;background:linear-gradient(90deg,#cfe0f6,#b9d1f1);border:1px solid #9bbbe4;border-radius:1px"></div>
<div class="a" style="left:965px;top:207px;width:8px;height:9px;background:#eef4fb"></div>
<div class="t" style="left:966px;top:209px;color:#3a6ab0;font-size:5px">▼</div>
<div class="a" style="left:249px;top:216px;width:716px;height:8px;background:linear-gradient(#dde9f8,#eef5fd);border-top:1px solid #8fb0dc;border-bottom:1px solid #9ab8e0"></div>
<div class="t" style="left:251px;top:217px;color:#3a6ab0;font-size:5px">◀</div>
<div class="a" style="left:257px;top:217px;width:240px;height:6px;background:linear-gradient(#eaf2fc,#c6dbf5);border:1px solid #a9c6ea;border-radius:1px"></div>
<div class="a" style="left:376px;top:218px;width:3px;height:3px;border-left:1px solid #7a9cc8;border-right:1px solid #7a9cc8"></div>
<div class="a" style="left:965px;top:216px;width:8px;height:8px;background:#dfe6ee"></div>
<div class="t" style="left:957px;top:217px;color:#3a6ab0;font-size:5px">▶</div>
<div class="a" style="left:249px;top:224px;width:724px;height:23px;background:#e1ecf9;border-top:1px solid #c3d6ee"></div>
<div class="t" style="left:259px;top:232px;color:#1e1e1e">Count=22</div>
<div class="a" style="left:248px;top:248px;width:726px;height:14px;background:#bcd0e8"></div>
<div class="a" style="left:250px;top:249px;width:73px;height:12px;background:#eef4fb"></div>
<svg class="a" style="left:251px;top:250px" width="10" height="10" viewBox="0 0 10 10"><path d="M6 6 L9 9" stroke="#e8a33a" stroke-width="1.6" stroke-linecap="round"/><circle cx="4.3" cy="4.3" r="3.4" fill="url(#glass)" stroke="#a9b8c8" stroke-width="0.9"/></svg>
<div class="t" style="left:262px;top:252px;color:#1e1e1e">Dle typu příspěvku</div>


<!-- FORM PANEL -->
<div class="a" style="left:249px;top:267px;width:724px;height:13px;background:#c8d9ee"></div>
<svg class="a" style="left:250px;top:268px" width="10" height="10" viewBox="0 0 10 10"><rect x="0.5" y="0.8" width="9" height="8.5" fill="#fff" stroke="#3a8ad8" stroke-width="0.9"/><rect x="0.5" y="0.8" width="9" height="2" fill="#5aa6e8"/></svg>
<div class="t" style="left:262px;top:270px;color:#8ea5c3">KOS - template Atest</div>
<svg class="a" style="left:955px;top:269px" width="6" height="8" viewBox="0 0 6 8"><rect x="1.5" y="0.5" width="3" height="3.5" fill="#3d5f9e"/><rect x="0.5" y="4" width="5" height="1.2" fill="#3d5f9e"/><path d="M3 5 V7.8" stroke="#3d5f9e" stroke-width="0.8"/></svg>
<svg class="a" style="left:964px;top:270px" width="7" height="7" viewBox="0 0 7 7"><path d="M1 1 L6 6 M6 1 L1 6" stroke="#2f4e86" stroke-width="1.2"/></svg>
<div class="a" style="left:249px;top:280px;width:83px;height:426px;background:#e1ecf9"></div>
<div class="a" style="left:332px;top:280px;width:641px;height:426px;background:#fff;border-left:1px solid #8eaedb"></div>

<div class="a" style="left:249px;top:280px;width:83px;height:13px;background:linear-gradient(#f4f8fd,#e4edf8 50%,#d9e6f6);border:1px solid #b7cce6"></div>
<div class="t" style="left:266px;top:283px;color:#1e1e1e">Základní údaje</div>
<div class="a" style="left:249px;top:292px;width:83px;height:13px;background:linear-gradient(#f4f8fd,#e4edf8 50%,#d9e6f6);border:1px solid #b7cce6"></div>
<div class="t" style="left:254px;top:294px;font-family:Liberation Serif;font-size:10px;color:#fff;-webkit-text-stroke:0.6px #777">T</div>
<div class="t" style="left:265px;top:295px;color:#1e1e1e">Tvoření názvu</div>
<div class="a" style="left:249px;top:304px;width:84px;height:13px;background:#fff;border-top:1px solid #b7cce6;border-bottom:1px solid #b7cce6"></div>
<svg class="a" style="left:254px;top:306px" width="10" height="10" viewBox="0 0 10 10"><path d="M0.5 0.5 V9.5 H9.5" stroke="#e8a030" stroke-width="1.4" fill="none"/><path d="M1.5 7 L4 4 L6 6 L9 2" stroke="#d89020" stroke-width="1.2" fill="none"/><rect x="0.5" y="5" width="9" height="4.5" fill="#f4c060" opacity="0.6"/></svg>
<div class="t" style="left:265px;top:307px;color:#1e1e1e">Design formulářů</div>
<div class="a" style="left:249px;top:317px;width:83px;height:13px;background:linear-gradient(#f4f8fd,#e4edf8 50%,#d9e6f6);border:1px solid #b7cce6"></div>
<svg class="a" style="left:254px;top:319px" width="10" height="10" viewBox="0 0 10 10"><rect x="0.5" y="3" width="9" height="4.5" fill="#e8eef5" stroke="#7d8ea3" stroke-width="0.7"/><path d="M2 4.5 H8 M2 6 H8" stroke="#7d8ea3" stroke-width="0.5"/></svg>
<div class="t" style="left:265px;top:320px;color:#1e1e1e">Formuláře šablony</div>
<div class="a" style="left:249px;top:329px;width:83px;height:13px;background:linear-gradient(#f4f8fd,#e4edf8 50%,#d9e6f6);border:1px solid #b7cce6"></div>
<svg class="a" style="left:254px;top:331px" width="10" height="10" viewBox="0 0 10 10"><path d="M5 0.5 L1.5 5.5 H4.5 L3 9.5 L8.5 4 H5.5 L7.5 0.5 Z" fill="#f5c030" stroke="#d89a10" stroke-width="0.4"/></svg>
<div class="t" style="left:265px;top:332px;color:#1e1e1e">Akce</div>
<div class="a" style="left:249px;top:341px;width:83px;height:13px;background:linear-gradient(#f4f8fd,#e4edf8 50%,#d9e6f6);border:1px solid #b7cce6"></div>
<svg class="a" style="left:254px;top:343px" width="10" height="10" viewBox="0 0 10 10"><path d="M1 8.5 L3 3 L7 1.5 L9.5 7 Z" fill="#c9c9c9" stroke="#7a7a7a" stroke-width="0.5"/><path d="M1 8.5 H9.5" stroke="#d8a040" stroke-width="1.2"/></svg>
<div class="t" style="left:265px;top:344px;color:#1e1e1e">Události</div>
<div class="a" style="left:249px;top:354px;width:83px;height:13px;background:linear-gradient(#f4f8fd,#e4edf8 50%,#d9e6f6);border:1px solid #b7cce6"></div>
<svg class="a" style="left:254px;top:356px" width="10" height="10" viewBox="0 0 10 10"><rect x="0.5" y="0.8" width="9" height="8.5" fill="#fff" stroke="#3a8ad8" stroke-width="0.9"/><rect x="0.5" y="0.8" width="9" height="2" fill="#5aa6e8"/></svg>
<div class="t" style="left:265px;top:357px;color:#1e1e1e">Číselník formulářů</div>
<div class="a" style="left:249px;top:366px;width:83px;height:13px;background:linear-gradient(#f4f8fd,#e4edf8 50%,#d9e6f6);border:1px solid #b7cce6"></div>
<svg class="a" style="left:254px;top:368px" width="10" height="10" viewBox="0 0 10 10"><rect x="0.5" y="0.5" width="9" height="9" fill="#fff" stroke="#7d8ea3" stroke-width="0.7"/><path d="M5 0.5 V9.5 M0.5 3.5 H9.5 M0.5 6.5 H9.5" stroke="#7d8ea3" stroke-width="0.5"/></svg>
<div class="t" style="left:265px;top:369px;color:#1e1e1e">Číselník seznamů</div>
<div class="a" style="left:249px;top:378px;width:83px;height:13px;background:linear-gradient(#f4f8fd,#e4edf8 50%,#d9e6f6);border:1px solid #b7cce6"></div>
<svg class="a" style="left:254px;top:380px" width="10" height="10" viewBox="0 0 10 10"><path d="M0.5 3.5 L2.5 1 H7.5 L9.5 3.5 L5 9.5 Z" fill="#e83030" stroke="#b81818" stroke-width="0.4"/><path d="M0.5 3.5 H9.5" stroke="#ff9090" stroke-width="0.6"/></svg>
<div class="t" style="left:265px;top:381px;color:#1e1e1e">Číselník atributů</div>
<div class="a" style="left:249px;top:390px;width:83px;height:13px;background:linear-gradient(#f4f8fd,#e4edf8 50%,#d9e6f6);border:1px solid #b7cce6"></div>
<svg class="a" style="left:254px;top:392px" width="10" height="10" viewBox="0 0 10 10"><rect x="0.5" y="0.5" width="9" height="3" fill="#4a9ae0"/><rect x="0.5" y="3.5" width="9" height="3" fill="#7cc040"/><rect x="0.5" y="6.5" width="9" height="3" fill="#f07a30"/></svg>
<div class="t" style="left:265px;top:393px;color:#1e1e1e">Číselník sekcí</div>
<div class="a" style="left:249px;top:402px;width:83px;height:13px;background:linear-gradient(#f4f8fd,#e4edf8 50%,#d9e6f6);border:1px solid #b7cce6"></div>
<svg class="a" style="left:254px;top:404px" width="10" height="10" viewBox="0 0 10 10"><path d="M1.5 1.5 L8.5 8.5 M8.5 1.5 L1.5 8.5" stroke="#e8483a" stroke-width="2.4" stroke-linecap="round"/></svg>
<div class="t" style="left:265px;top:405px;color:#1e1e1e">Smazání</div>

<div class="t b" style="left:345px;top:288px;font-size:9.8px;color:#1a1a1a">Design formulářů</div>
<div class="t" style="left:345px;top:312px;color:#1e1e1e;letter-spacing:0.05px">Vyberte formulář, který chcete navrhovat. Zobrazte Toolbox. Klepněte na control, který chcete do formuláře přidat. V menu dostupných kolonek (ikonka v levém horním rohu artboardu) se objeví nové</div>
<div class="t" style="left:345px;top:321px;color:#1e1e1e;letter-spacing:0.05px">pole obsahující daný control. Jeho vlastnosti nastavte v Property Builderu vpravo.</div>
<div class="t b" style="left:347px;top:344px;color:#1a1a1a">Designed Form:</div>
<div class="a" style="left:403px;top:341px;width:63px;height:13px;background:linear-gradient(#eaf2fc,#d2e3f8);border:1px solid #a9c4e8;border-radius:2px"></div>
<div class="t" style="left:406px;top:344px;color:#1e1e1e">Měřené zkoušky</div>
<svg class="a" style="left:461px;top:347px" width="4" height="3" viewBox="0 0 4 3"><path d="M0 0 H4 L2 2.5 Z" fill="#555"/></svg>
<div class="t" style="left:482px;top:344px;color:#1e1e1e">Language:</div>
<div class="a" style="left:517px;top:341px;width:48px;height:13px;background:linear-gradient(#eaf2fc,#d2e3f8);border:1px solid #a9c4e8;border-radius:2px"></div>
<svg class="a" style="left:520px;top:344px" width="10" height="7" viewBox="0 0 10 7"><rect width="10" height="3.5" fill="#fff"/><rect y="3.5" width="10" height="3.5" fill="#d8252a"/><path d="M0 0 L5 3.5 L0 7 Z" fill="#1d5ab8"/></svg>
<div class="t" style="left:532px;top:344px;color:#1e1e1e">čeština</div>
<svg class="a" style="left:557px;top:347px" width="4" height="3" viewBox="0 0 4 3"><path d="M0 0 H4 L2 2.5 Z" fill="#555"/></svg>
<!-- design area -->
<div class="a" style="left:334px;top:361px;width:637px;height:237px;border:1px solid #f05050;border-right:none"></div>
<div class="a" style="left:340px;top:367px;width:51px;height:13px;background:#fcd8d8;border:1.5px solid #e82020;border-radius:2px"></div>
<div class="t" style="left:342px;top:370px;color:#333">Veličina A:</div>
<div class="a" style="left:374px;top:369px;width:3px;height:8px;border:1px solid #b9a3c8"></div>
<div class="a" style="left:336px;top:363px;width:12px;height:11px;background:#b9b9b9;border:1px solid #8c8c8c;border-radius:1px;opacity:0.9"></div>
<div class="a" style="left:338px;top:365px;width:8px;height:1px;background:#fff;box-shadow:0 2px 0 #fff,0 4px 0 #fff"></div>
<div class="a" style="left:376px;top:383px;width:168px;height:13px;border:1px solid #a3bde3;background:#fff"></div>
<div class="t" style="left:366px;top:386px;color:#333">B:</div>
<div class="a" style="left:376px;top:402px;width:168px;height:13px;border:1px solid #a3bde3;background:#fff"></div>
<div class="t" style="left:341px;top:421px;color:#333">Veličina D:</div>
<div class="a" style="left:376px;top:435px;width:197px;height:84px;border:1px solid #a3bde3;background:#fff"></div>
<div class="t" style="left:341px;top:474px;color:#333">Veličina E:</div>
<div class="t" style="left:355px;top:533px;color:#333">50187</div>
<div class="a" style="left:376px;top:525px;width:32px;height:21px;background:linear-gradient(#fbfcfd,#e1e5ea);border:1px solid #a8b2bd;border-radius:2px"></div>
<svg class="a" style="left:380px;top:531px" width="9" height="9" viewBox="0 0 9 9"><rect x="0.3" y="0.3" width="8.4" height="8.4" rx="0.8" fill="#4a9ae0"/><rect x="1.3" y="0.8" width="6.4" height="3.6" fill="#f4f8fc"/><rect x="2.2" y="5.3" width="4.6" height="3.4" fill="#d8e2ec"/><rect x="2.9" y="6" width="1.1" height="2" fill="#345"/></svg>
<div class="t" style="left:391px;top:532px;color:#222">OK</div>
<div class="a" style="left:345px;top:604px;width:29px;height:18px;background:linear-gradient(#fbfcfd,#e1e5ea);border:1px solid #a8b2bd;border-radius:2px"></div>
<svg class="a" style="left:348px;top:609px" width="9" height="9" viewBox="0 0 9 9"><rect x="0.3" y="0.3" width="8.4" height="8.4" rx="0.8" fill="#4a9ae0"/><rect x="1.3" y="0.8" width="6.4" height="3.6" fill="#f4f8fc"/><rect x="2.2" y="5.3" width="4.6" height="3.4" fill="#d8e2ec"/><rect x="2.9" y="6" width="1.1" height="2" fill="#345"/></svg>
<div class="t" style="left:359px;top:610px;color:#222">OK</div>

<div class="a" style="left:467px;top:342px;width:10px;height:10px;border-radius:50%;background:radial-gradient(circle at 40% 35%,#8fc0f0,#3d86d6 70%);color:#fff;font-size:7px;font-weight:bold;text-align:center;line-height:10px">?</div>
<div class="a" style="left:566px;top:342px;width:10px;height:10px;border-radius:50%;background:radial-gradient(circle at 40% 35%,#8fc0f0,#3d86d6 70%);color:#fff;font-size:7px;font-weight:bold;text-align:center;line-height:10px">?</div>
<div class="a" style="left:379px;top:368px;width:10px;height:10px;border-radius:50%;background:radial-gradient(circle at 40% 35%,#8fc0f0,#7d7fc8 70%);color:#fff;font-size:7px;font-weight:bold;text-align:center;line-height:10px">?</div>
<div class="a" style="left:546px;top:384px;width:10px;height:10px;border-radius:50%;background:radial-gradient(circle at 40% 35%,#8fc0f0,#3d86d6 70%);color:#fff;font-size:7px;font-weight:bold;text-align:center;line-height:10px">?</div>
<div class="a" style="left:546px;top:403px;width:10px;height:10px;border-radius:50%;background:radial-gradient(circle at 40% 35%,#8fc0f0,#3d86d6 70%);color:#fff;font-size:7px;font-weight:bold;text-align:center;line-height:10px">?</div>
<div class="a" style="left:380px;top:419px;width:10px;height:10px;border-radius:50%;background:radial-gradient(circle at 40% 35%,#8fc0f0,#3d86d6 70%);color:#fff;font-size:7px;font-weight:bold;text-align:center;line-height:10px">?</div>
<div class="a" style="left:574px;top:472px;width:10px;height:10px;border-radius:50%;background:radial-gradient(circle at 40% 35%,#8fc0f0,#3d86d6 70%);color:#fff;font-size:7px;font-weight:bold;text-align:center;line-height:10px">?</div>

<!-- toolbox overlay -->
<div class="a" style="left:298px;top:380px;width:135px;height:43px;background:rgba(110,110,110,0.62);border-radius:3px"></div>
<div class="a" style="left:302px;top:390px;width:36px;height:24px;background:linear-gradient(#fdfdfd,#d8d8d8);border-radius:2px;border:1px solid #9a9a9a"></div>
<div class="a" style="left:303px;top:391px;width:11px;height:11px;background:#8c8c8c"></div>
<div class="a" style="left:314px;top:391px;width:1px;height:11px;background:#aaa"></div>
<div class="a" style="left:326px;top:391px;width:1px;height:11px;background:#aaa"></div>
<div class="a" style="left:303px;top:402px;width:34px;height:1px;background:#aaa"></div>
<div class="a" style="left:305px;top:393px;width:1.5px;height:7px;background:#111"></div>
<div class="a" style="left:306px;top:396px;width:5px;height:1.5px;background:#fff"></div>
<div class="a" style="left:318px;top:394px;width:5px;height:5px;border:1px dashed #444"></div>
<div class="a" style="left:334px;top:393px;width:1.5px;height:7px;background:#111"></div>
<div class="a" style="left:329px;top:396px;width:5px;height:1.5px;background:#666"></div>
<div class="a" style="left:312px;top:405px;width:1.5px;height:6px;background:#111"></div>
<div class="a" style="left:326px;top:405px;width:1.5px;height:6px;background:#111"></div>
<div class="a" style="left:313px;top:407px;width:14px;height:2px;border-top:1px solid #333;border-bottom:1px solid #333"></div>
<div class="a" style="left:340px;top:384px;width:25px;height:36px;background:linear-gradient(90deg,#fdfdfd,#d8d8d8);border-radius:2px;border:1px solid #9a9a9a"></div>
<div class="a" style="left:341px;top:385px;width:11px;height:11px;background:#8c8c8c"></div>
<div class="a" style="left:352px;top:385px;width:1px;height:34px;background:#aaa"></div>
<div class="a" style="left:341px;top:396px;width:11px;height:1px;background:#aaa"></div>
<div class="a" style="left:341px;top:408px;width:11px;height:1px;background:#aaa"></div>
<div class="a" style="left:343px;top:387px;width:7px;height:1.5px;background:#111"></div>
<div class="a" style="left:345.5px;top:388px;width:2px;height:5px;background:#fff"></div>
<div class="a" style="left:343px;top:417px;width:7px;height:1.5px;background:#111"></div>
<div class="a" style="left:345.5px;top:411px;width:2px;height:5px;border:0.5px solid #888"></div>
<div class="a" style="left:344px;top:399px;width:5px;height:6px;border:1px dashed #444"></div>
<div class="a" style="left:355px;top:392px;width:7px;height:1.5px;background:#111"></div>
<div class="a" style="left:357.5px;top:393px;width:2px;height:18px;border:0.5px solid #666"></div>
<div class="a" style="left:355px;top:411px;width:7px;height:1.5px;background:#111"></div>
<div class="a" style="left:367px;top:390px;width:15px;height:24px;background:linear-gradient(#fdfdfd,#d8d8d8);border-radius:2px;border:1px solid #9a9a9a"></div>
<div class="a" style="left:367px;top:402px;width:15px;height:1px;background:#aaa"></div>
<div class="t" style="left:372px;top:391px;color:#111;font-size:6px">▴</div>
<div class="a" style="left:369px;top:399px;width:11px;height:2px;border:0.5px solid #999;background:#fff"></div>
<div class="a" style="left:369px;top:404px;width:11px;height:2px;border:0.5px solid #999;background:#fff"></div>
<div class="t" style="left:372px;top:406px;color:#111;font-size:6px">▾</div>
<div class="a" style="left:384px;top:388px;width:20px;height:13px;background:linear-gradient(#fdfdfd,#dcdcdc);border-radius:2px;border:1px solid #9a9a9a"></div>
<div class="t" style="left:387px;top:391px;color:#333;font-size:6.5px">Abc</div>
<div class="a" style="left:387px;top:404px;width:15px;height:13px;background:linear-gradient(#fdfdfd,#dcdcdc);border-radius:2px;border:1px solid #9a9a9a"></div>
<svg class="a" style="left:389px;top:405px" width="11" height="11" viewBox="0 0 11 11"><path d="M1.5 1.5 L9.5 9.5 M9.5 1.5 L1.5 9.5" stroke="#111" stroke-width="1.4"/></svg>
<div class="a" style="left:408px;top:393px;width:21px;height:18px;background:linear-gradient(#fdfdfd,#dcdcdc);border-radius:2px;border:1px solid #9a9a9a"></div>
<div class="a" style="left:410px;top:395px;width:17px;height:3px;border:1px solid #e02828;background:#f7c0c0"></div>
<div class="t" style="left:416px;top:399px;color:#111;font-size:5px">⬍</div>
<div class="a" style="left:410px;top:405px;width:17px;height:1px;background:#bbb"></div>
<div class="a" style="left:415px;top:404px;width:6px;height:3px;border:1px solid #e02828;border-radius:1px;background:#fff"></div>
<!-- form scrollbar + tabs -->
<div class="a" style="left:332px;top:705px;width:641px;height:8px;background:linear-gradient(#dde9f8,#eef5fd);border-top:1px solid #8fb0dc"></div>
<div class="t" style="left:335px;top:707px;color:#3a6ab0;font-size:5px">◀</div>
<div class="a" style="left:342px;top:706px;width:613px;height:7px;background:linear-gradient(#eaf2fc,#c6dbf5);border:1px solid #a9c6ea;border-radius:1px"></div>
<div class="a" style="left:647px;top:708px;width:3px;height:3px;border-left:1px solid #7a9cc8;border-right:1px solid #7a9cc8"></div>
<div class="t" style="left:966px;top:707px;color:#3a6ab0;font-size:5px">▶</div>
<div class="a" style="left:249px;top:706px;width:83px;height:7px;background:#e1ecf9"></div>
<div class="a" style="left:248px;top:713px;width:726px;height:15px;background:#bcd0e8"></div>
<svg class="a" style="left:252px;top:716px" width="10" height="10" viewBox="0 0 10 10"><path d="M3 5.5 L0.8 9.3 L2.6 9 L3.6 10 L5 7 L6.4 10 L7.4 9 L9.2 9.3 L7 5.5 Z" fill="#d81212"/><circle cx="5" cy="4" r="3.7" fill="#e81c1c"/><circle cx="5" cy="4" r="2" fill="none" stroke="#c40e0e" stroke-width="0.7"/></svg>
<div class="t" style="left:263px;top:717px;color:#1e1e1e">22 - 25 / - test Mar silice citron</div>
<div class="a" style="left:364px;top:715px;width:81px;height:12px;background:#eef4fb"></div>
<svg class="a" style="left:366px;top:716px" width="10" height="10" viewBox="0 0 10 10"><rect x="0.5" y="0.8" width="9" height="8.5" fill="#fff" stroke="#3a8ad8" stroke-width="0.9"/><rect x="0.5" y="0.8" width="9" height="2" fill="#5aa6e8"/></svg>
<div class="t" style="left:377px;top:717px;color:#1e1e1e">KOS - template Atest</div>


<!-- PROPERTY PANEL -->
<div class="a" style="left:979px;top:73px;width:239px;height:11px;background:#bfd3ec"></div>
<svg class="a" style="left:980px;top:74px" width="10" height="10" viewBox="0 0 10 10"><path d="M1.5 8.5 L6 4" stroke="#3f8fd8" stroke-width="2.2" stroke-linecap="round"/><path d="M5.5 4.5 L7 1.5 C7.5 0.8 9 0.6 9.5 1 L8.3 2.2 L9 3 L9.8 2.3 C9.8 3.5 8.8 4.2 7.5 4 L6.5 5 Z" fill="#b8b8b8"/></svg>
<div class="t" style="left:991px;top:75px;color:#4a6aa0">Property Builder</div>
<svg class="a" style="left:1209px;top:75px" width="7" height="7" viewBox="0 0 7 7"><path d="M1 1 L6 6 M6 1 L1 6" stroke="#2f4e86" stroke-width="1.2"/></svg>
<div class="a" style="left:979px;top:84px;width:239px;height:14px;background:linear-gradient(#e9f2fd,#d2e4fa 50%,#b5d2f7);border-bottom:1px solid #a5c3ea"></div>
<div class="a" style="left:980px;top:86px;width:1px;height:10px;border-left:1px dotted #6a8ab8"></div>
<svg class="a" style="left:984px;top:86px" width="10" height="10" viewBox="0 0 10 10"><rect x="0.3" y="0.3" width="9.4" height="9.4" rx="1" fill="#2f7fd0"/><rect x="1.5" y="1" width="7" height="4" fill="#f4f8fc"/><path d="M2.5 2.2 H7.5 M2.5 3.6 H7.5" stroke="#9ab" stroke-width="0.4"/><rect x="2.5" y="6" width="5" height="3.7" fill="#d8e2ec"/><rect x="3.3" y="6.8" width="1.2" height="2.2" fill="#345"/></svg>
<div class="a" style="left:996px;top:86px;width:1px;height:10px;background:#a9c4e6"></div>
<svg class="a" style="left:1000px;top:85px" width="50" height="12" viewBox="0 0 50 12">
 <path d="M4.3 1 V9 M2 6.5 L4.3 10 L6.6 6.5" stroke="#b4d898" stroke-width="1.6" fill="none"/>
 <path d="M13 1.5 V10.5 M13 5.5 H19 M17 3 L20 5.5 L17 8" stroke="#b4d898" stroke-width="1.6" fill="none"/>
 <path d="M32.5 2 L26 6 L32.5 10" stroke="#b4d898" stroke-width="1.8" fill="none"/><circle cx="32" cy="6" r="1.5" fill="none" stroke="#b4d898" stroke-width="1"/>
 <path d="M37 4 L39 1.5 H44 L46 4 L41.5 10 Z" fill="#f2a8b4"/>
</svg>
<div class="a" style="left:1048px;top:86px;width:1px;height:10px;background:#8fb0dc"></div>
<svg class="a" style="left:1052px;top:86px" width="10" height="10" viewBox="0 0 10 10"><path d="M1.5 1.5 L8.5 8.5 M8.5 1.5 L1.5 8.5" stroke="#f0a8a8" stroke-width="2.2" stroke-linecap="round"/></svg>
<div class="a" style="left:1211px;top:84px;width:7px;height:14px;background:linear-gradient(#c9ddf6,#9dbde8)"></div>
<div class="t" style="left:1212px;top:91px;color:#222;font-size:5px">▼</div>
<div class="a" style="left:979px;top:98px;width:239px;height:134px;background:#e3edfa"></div>
<div class="t" style="left:988px;top:107px;color:#222;font-size:6px">◢</div>
<svg class="a" style="left:997px;top:105px" width="10" height="10" viewBox="0 0 11 11"><circle cx="5.5" cy="5.5" r="4.8" fill="#fbd460" stroke="#e09a20" stroke-width="0.7"/><rect x="2.5" y="5.5" width="6" height="3" rx="1" fill="#d6ecfa"/><circle cx="4" cy="3.8" r="0.6" fill="#333"/><circle cx="7" cy="3.8" r="0.6" fill="#333"/></svg>
<div class="t" style="left:1009px;top:107px;color:#1e1e1e">KOS - atest - vzor zkoušek</div>
<div class="a" style="left:1001px;top:117px;width:1px;height:10px;background:#c4c4c4"></div>
<div class="t" style="left:999px;top:124px;color:#222;font-size:6px">◢</div>
<div class="a" style="left:1009px;top:120px;width:85px;height:15px;background:#d4d4d4"></div>
<svg class="a" style="left:1013px;top:122px" width="7" height="11" viewBox="0 0 7 11"><path d="M2.3 0.5 H4.7 V6 H6.5 L3.5 10.5 L0.5 6 H2.3 Z" fill="#7cc21c" stroke="#5a9a10" stroke-width="0.4"/></svg>
<div class="t" style="left:1023px;top:125px;color:#1e1e1e">KOS - template Atest</div>
<div class="a" style="left:1011px;top:137px;width:1px;height:62px;background:#d4d4d4"></div>

<div class="a" style="left:1011px;top:144px;width:8px;height:1px;background:#d4d4d4"></div>
<svg class="a" style="left:1020px;top:140px" width="10" height="8" viewBox="0 0 10 8"><path d="M0.5 2.5 L2.5 0.5 H7.5 L9.5 2.5 L5 7.8 Z" fill="#e82828"/><path d="M0.5 2.5 H9.5" stroke="#ff9a9a" stroke-width="0.6"/></svg>
<div class="t" style="left:1031px;top:141px;color:#1e1e1e;font-size:5.5px">50363</div>
<div class="t" style="left:1049px;top:140px;color:#1e1e1e">KOS - atest - vzor zkoušek - číslo <span style="font-size:5.5px">50230</span></div>
<div class="a" style="left:1011px;top:158px;width:8px;height:1px;background:#d4d4d4"></div>
<svg class="a" style="left:1020px;top:154px" width="10" height="8" viewBox="0 0 10 8"><path d="M0.5 2.5 L2.5 0.5 H7.5 L9.5 2.5 L5 7.8 Z" fill="#e82828"/><path d="M0.5 2.5 H9.5" stroke="#ff9a9a" stroke-width="0.6"/></svg>
<div class="t" style="left:1031px;top:155px;color:#1e1e1e;font-size:5.5px">50361</div>
<div class="t" style="left:1049px;top:154px;color:#1e1e1e">KOS - atest - vzor zkoušek - radiobuttons <span style="font-size:5.5px">50231</span></div>
<div class="a" style="left:1011px;top:171px;width:8px;height:1px;background:#d4d4d4"></div>
<svg class="a" style="left:1020px;top:167px" width="10" height="8" viewBox="0 0 10 8"><path d="M0.5 2.5 L2.5 0.5 H7.5 L9.5 2.5 L5 7.8 Z" fill="#e82828"/><path d="M0.5 2.5 H9.5" stroke="#ff9a9a" stroke-width="0.6"/></svg>
<div class="t" style="left:1031px;top:168px;color:#1e1e1e;font-size:5.5px">50362</div>
<div class="t" style="left:1049px;top:167px;color:#1e1e1e">KOS - atest - vzor zkoušek - textbox <span style="font-size:5.5px">50232</span></div>
<div class="a" style="left:1011px;top:184px;width:8px;height:1px;background:#d4d4d4"></div>
<svg class="a" style="left:1020px;top:180px" width="10" height="8" viewBox="0 0 10 8"><path d="M0.5 2.5 L2.5 0.5 H7.5 L9.5 2.5 L5 7.8 Z" fill="#e82828"/><path d="M0.5 2.5 H9.5" stroke="#ff9a9a" stroke-width="0.6"/></svg>
<div class="t" style="left:1031px;top:181px;color:#1e1e1e;font-size:5.5px">50364</div>
<div class="t" style="left:1049px;top:180px;color:#1e1e1e">KOS - atest - vzor zkoušek - soubor <span style="font-size:5.5px">50233</span></div>
<div class="a" style="left:1011px;top:198px;width:8px;height:1px;background:#d4d4d4"></div>
<svg class="a" style="left:1020px;top:194px" width="10" height="8" viewBox="0 0 10 8"><path d="M0.5 2.5 L2.5 0.5 H7.5 L9.5 2.5 L5 7.8 Z" fill="#e82828"/><path d="M0.5 2.5 H9.5" stroke="#ff9a9a" stroke-width="0.6"/></svg>
<div class="t" style="left:1031px;top:195px;color:#1e1e1e;font-size:5.5px">50363</div>
<div class="t" style="left:1049px;top:194px;color:#1e1e1e">KOS - atest - vzor zkoušek - dlouhý text <span style="font-size:5.5px">50234</span></div>

<div class="a" style="left:979px;top:232px;width:239px;height:2px;border-top:1px solid #a9c4e6;border-bottom:1px solid #c9daee;background:#dfe9f6"></div>
<div class="t" style="left:1094px;top:228px;color:#7f98b8;font-size:5px;letter-spacing:0.3px">····</div>
<div class="a" style="left:979px;top:234px;width:239px;height:14px;background:#d6e5f8"></div>
<div class="a" style="left:979px;top:234px;width:16px;height:14px;background:linear-gradient(#fde0b8 0,#fcc890 45%,#fb9a30 50%,#fdbf40 100%);border:1px solid #f3d27a;border-radius:2px"></div>
<svg class="a" style="left:982px;top:237px" width="10" height="8" viewBox="0 0 10 8"><path d="M0.5 0.5 L2.5 2 L0.5 3.5Z M0.5 4 L2.5 5.5 L0.5 7Z" fill="#2f6fc0"/><rect x="4" y="1" width="5.5" height="1.6" fill="#8a8a8a"/><rect x="4" y="4.5" width="5.5" height="1.6" fill="#8a8a8a"/></svg>
<div class="a" style="left:997px;top:235px;width:15px;height:13px;background:linear-gradient(#e6f0fb,#c9dcf4);border:1px solid #b2cae9;border-radius:1px"></div>
<div class="t" style="left:999px;top:238px;color:#333;font-size:6.5px">A-Z</div>
<div class="a" style="left:1015px;top:235px;width:203px;height:13px;background:#fff;border:1px solid #b2cae9"></div>
<svg class="a" style="left:1206px;top:236px" width="10" height="10" viewBox="0 0 10 10"><circle cx="6" cy="4" r="3" fill="none" stroke="#8a9cb2" stroke-width="1"/><path d="M4 6 L1 9" stroke="#8a9cb2" stroke-width="1.3"/></svg>
<div class="a" style="left:979px;top:248px;width:239px;height:422px;background:#fff"></div>

<div class="a" style="left:979px;top:248px;width:239px;height:14px;background:#deebfa;border-bottom:1px solid #c6d9f0"></div>
<svg class="a" style="left:983px;top:255px" width="6" height="4" viewBox="0 0 6 4"><path d="M0.8 3.3 L3 1 L5.2 3.3" stroke="#3a7ad0" stroke-width="1" fill="none"/></svg>
<div class="t b" style="left:993px;top:252px;color:#1a1a1a;letter-spacing:0.05px">Description</div>
<div class="a" style="left:979px;top:262px;width:14px;height:14px;background:#deebfa"></div>
<div class="a" style="left:993px;top:275px;width:225px;height:1px;background:#d0def0"></div>
<div class="a" style="left:1082px;top:262px;width:1px;height:14px;background:#d0def0"></div>
<div class="a" style="left:992px;top:262px;width:1px;height:14px;background:#c6d6ec"></div>
<div class="t" style="left:995px;top:266px;color:#1e1e1e">Translated Label</div>
<div class="a" style="left:1083px;top:263px;width:112px;height:12px;background:#fff;border:1px solid #c1d4ec;border-radius:1px;box-shadow:inset 0 1px 0 #dfe8f3"></div>
<div class="t" style="left:1086px;top:266px;color:#1e1e1e">Veličina A</div>
<div class="a" style="left:979px;top:276px;width:14px;height:14px;background:#deebfa"></div>
<div class="a" style="left:993px;top:289px;width:225px;height:1px;background:#d0def0"></div>
<div class="a" style="left:1082px;top:276px;width:1px;height:14px;background:#d0def0"></div>
<div class="a" style="left:992px;top:276px;width:1px;height:14px;background:#c6d6ec"></div>
<div class="t" style="left:995px;top:280px;color:#1e1e1e">Translated Help</div>
<div class="a" style="left:1083px;top:277px;width:112px;height:12px;background:#fff;border:1px solid #c1d4ec;border-radius:1px;box-shadow:inset 0 1px 0 #dfe8f3"></div>
<div class="t" style="left:1086px;top:280px;color:#1e1e1e">Nápověda k veličině A</div>
<div class="a" style="left:979px;top:290px;width:239px;height:14px;background:#deebfa;border-bottom:1px solid #c6d9f0"></div>
<svg class="a" style="left:983px;top:297px" width="6" height="4" viewBox="0 0 6 4"><path d="M0.8 3.3 L3 1 L5.2 3.3" stroke="#3a7ad0" stroke-width="1" fill="none"/></svg>
<div class="t b" style="left:993px;top:294px;color:#1a1a1a;letter-spacing:0.05px">Value</div>
<div class="a" style="left:979px;top:304px;width:14px;height:14px;background:#deebfa"></div>
<div class="a" style="left:993px;top:317px;width:225px;height:1px;background:#d0def0"></div>
<div class="a" style="left:1082px;top:304px;width:1px;height:14px;background:#d0def0"></div>
<div class="a" style="left:992px;top:304px;width:1px;height:14px;background:#c6d6ec"></div>
<div class="t" style="left:995px;top:308px;color:#1e1e1e">Attribute</div>
<div class="a" style="left:1083px;top:305px;width:112px;height:12px;background:#fff;border:1px solid #c1d4ec;border-radius:1px;box-shadow:inset 0 1px 0 #dfe8f3"></div>
<div class="t" style="left:1086px;top:308px;color:#1e1e1e">KOS - atest - vzor zkoušek - ra</div>
<svg class="a" style="left:1188px;top:309px" width="6" height="6" viewBox="0 0 6 6"><path d="M0.8 0.8 L5.2 5.2 M5.2 0.8 L0.8 5.2" stroke="#3d5f9e" stroke-width="1"/></svg>
<div class="a" style="left:979px;top:318px;width:14px;height:14px;background:#deebfa"></div>
<div class="a" style="left:993px;top:331px;width:225px;height:1px;background:#d0def0"></div>
<div class="a" style="left:1082px;top:318px;width:1px;height:14px;background:#d0def0"></div>
<div class="a" style="left:992px;top:318px;width:1px;height:14px;background:#c6d6ec"></div>
<div class="t" style="left:995px;top:322px;color:#1e1e1e">Property path</div>
<div class="a" style="left:1083px;top:319px;width:112px;height:12px;background:#fff;border:1px solid #c1d4ec;border-radius:1px;box-shadow:inset 0 1px 0 #dfe8f3"></div>
<div class="a" style="left:979px;top:332px;width:14px;height:14px;background:#deebfa"></div>
<div class="a" style="left:993px;top:345px;width:225px;height:1px;background:#d0def0"></div>
<div class="a" style="left:1082px;top:332px;width:1px;height:14px;background:#d0def0"></div>
<div class="a" style="left:992px;top:332px;width:1px;height:14px;background:#c6d6ec"></div>
<div class="t" style="left:995px;top:336px;color:#1e1e1e">Has Default Value?</div>
<div class="a" style="left:1084px;top:336px;width:7px;height:7px;border:1px solid #a8bedc;background:linear-gradient(135deg,#dfe7f2,#fff)"></div>
<div class="a" style="left:979px;top:346px;width:14px;height:14px;background:#deebfa"></div>
<div class="a" style="left:993px;top:359px;width:225px;height:1px;background:#d0def0"></div>
<div class="a" style="left:1082px;top:346px;width:1px;height:14px;background:#d0def0"></div>
<div class="a" style="left:992px;top:346px;width:1px;height:14px;background:#c6d6ec"></div>
<div class="t" style="left:995px;top:350px;color:#1e1e1e">Default Value</div>
<div class="a" style="left:1083px;top:347px;width:112px;height:12px;background:#fff;border:1px solid #c1d4ec;border-radius:1px;box-shadow:inset 0 1px 0 #dfe8f3"></div>
<div class="a" style="left:979px;top:360px;width:14px;height:14px;background:#deebfa"></div>
<div class="a" style="left:993px;top:373px;width:225px;height:1px;background:#d0def0"></div>
<div class="a" style="left:1082px;top:360px;width:1px;height:14px;background:#d0def0"></div>
<div class="a" style="left:992px;top:360px;width:1px;height:14px;background:#c6d6ec"></div>
<div class="t" style="left:995px;top:364px;color:#1e1e1e">Copy Value From</div>
<div class="a" style="left:1083px;top:361px;width:112px;height:12px;background:#fff;border:1px solid #c1d4ec;border-radius:1px;box-shadow:inset 0 1px 0 #dfe8f3"></div>
<svg class="a" style="left:1188px;top:365px" width="6" height="6" viewBox="0 0 6 6"><path d="M0.8 0.8 L5.2 5.2 M5.2 0.8 L0.8 5.2" stroke="#3d5f9e" stroke-width="1"/></svg>
<div class="a" style="left:979px;top:374px;width:239px;height:14px;background:#deebfa;border-bottom:1px solid #c6d9f0"></div>
<svg class="a" style="left:983px;top:381px" width="6" height="4" viewBox="0 0 6 4"><path d="M0.8 3.3 L3 1 L5.2 3.3" stroke="#3a7ad0" stroke-width="1" fill="none"/></svg>
<div class="t b" style="left:993px;top:378px;color:#1a1a1a;letter-spacing:0.05px">Permissions And Visibility</div>
<div class="a" style="left:979px;top:388px;width:14px;height:14px;background:#deebfa"></div>
<div class="a" style="left:993px;top:401px;width:225px;height:1px;background:#d0def0"></div>
<div class="a" style="left:1082px;top:388px;width:1px;height:14px;background:#d0def0"></div>
<div class="a" style="left:992px;top:388px;width:1px;height:14px;background:#c6d6ec"></div>
<div class="t" style="left:995px;top:392px;color:#1e1e1e">Is hidden</div>
<div class="a" style="left:1084px;top:392px;width:7px;height:7px;border:1px solid #a8bedc;background:linear-gradient(135deg,#dfe7f2,#fff)"></div>
<div class="a" style="left:979px;top:402px;width:14px;height:14px;background:#deebfa"></div>
<div class="a" style="left:993px;top:415px;width:225px;height:1px;background:#d0def0"></div>
<div class="a" style="left:1082px;top:402px;width:1px;height:14px;background:#d0def0"></div>
<div class="a" style="left:992px;top:402px;width:1px;height:14px;background:#c6d6ec"></div>
<div class="t" style="left:995px;top:406px;color:#1e1e1e">Is mandatory</div>
<div class="a" style="left:1084px;top:406px;width:7px;height:7px;border:1px solid #a8bedc;background:linear-gradient(135deg,#dfe7f2,#fff)"></div>
<div class="a" style="left:979px;top:416px;width:14px;height:14px;background:#deebfa"></div>
<div class="a" style="left:993px;top:429px;width:225px;height:1px;background:#d0def0"></div>
<div class="a" style="left:1082px;top:416px;width:1px;height:14px;background:#d0def0"></div>
<div class="a" style="left:992px;top:416px;width:1px;height:14px;background:#c6d6ec"></div>
<div class="t" style="left:995px;top:420px;color:#1e1e1e">Is read only</div>
<div class="a" style="left:1084px;top:420px;width:7px;height:7px;border:1px solid #a8bedc;background:linear-gradient(135deg,#dfe7f2,#fff)"></div>
<div class="a" style="left:979px;top:430px;width:14px;height:14px;background:#deebfa"></div>
<div class="a" style="left:993px;top:443px;width:225px;height:1px;background:#d0def0"></div>
<div class="a" style="left:1082px;top:430px;width:1px;height:14px;background:#d0def0"></div>
<div class="a" style="left:992px;top:430px;width:1px;height:14px;background:#c6d6ec"></div>
<div class="t" style="left:995px;top:434px;color:#1e1e1e">XML parameters</div>
<div class="a" style="left:1139px;top:431px;width:21px;height:12px;background:linear-gradient(#f4f8fd,#cfe0f6);border:1px solid #b2c9e8;border-radius:2px"></div>
<svg class="a" style="left:1141px;top:433px" width="10" height="8" viewBox="0 0 10 8"><path d="M0.5 7.5 L1 5.5 L6 0.8 L7.5 2.2 L2.5 7 Z" fill="#f0a020" stroke="#9a6010" stroke-width="0.4"/></svg>
<div class="t" style="left:1153px;top:435px;color:#333;font-size:5px">▾</div>
<div class="a" style="left:979px;top:444px;width:14px;height:14px;background:#deebfa"></div>
<div class="a" style="left:993px;top:457px;width:225px;height:1px;background:#d0def0"></div>
<div class="a" style="left:1082px;top:444px;width:1px;height:14px;background:#d0def0"></div>
<div class="a" style="left:992px;top:444px;width:1px;height:14px;background:#c6d6ec"></div>
<div class="a" style="left:993px;top:445px;width:89px;height:13px;background:linear-gradient(#fde9c8,#fbd8a0);border:1px solid #f2c77a"></div>
<div class="t" style="left:983px;top:447px;color:#3a7ad0;font-size:7px">›</div>
<div class="t" style="left:995px;top:448px;color:#1e1e1e">Field XAML style</div>
<div class="a" style="left:1139px;top:445px;width:21px;height:12px;background:linear-gradient(#f4f8fd,#cfe0f6);border:1px solid #b2c9e8;border-radius:2px"></div>
<svg class="a" style="left:1141px;top:447px" width="10" height="8" viewBox="0 0 10 8"><path d="M0.5 7.5 L1 5.5 L6 0.8 L7.5 2.2 L2.5 7 Z" fill="#f0a020" stroke="#9a6010" stroke-width="0.4"/></svg>
<div class="t" style="left:1153px;top:449px;color:#333;font-size:5px">▾</div>
<div class="a" style="left:979px;top:458px;width:14px;height:14px;background:#deebfa"></div>
<div class="a" style="left:993px;top:471px;width:225px;height:1px;background:#d0def0"></div>
<div class="a" style="left:1082px;top:458px;width:1px;height:14px;background:#d0def0"></div>
<div class="a" style="left:992px;top:458px;width:1px;height:14px;background:#c6d6ec"></div>
<div class="t" style="left:995px;top:462px;color:#1e1e1e">Visible When Field 1</div>
<div class="a" style="left:1083px;top:459px;width:112px;height:12px;background:#fff;border:1px solid #c1d4ec;border-radius:1px;box-shadow:inset 0 1px 0 #dfe8f3"></div>
<svg class="a" style="left:1188px;top:463px" width="6" height="6" viewBox="0 0 6 6"><path d="M0.8 0.8 L5.2 5.2 M5.2 0.8 L0.8 5.2" stroke="#3d5f9e" stroke-width="1"/></svg>
<div class="a" style="left:979px;top:472px;width:14px;height:14px;background:#deebfa"></div>
<div class="a" style="left:993px;top:485px;width:225px;height:1px;background:#d0def0"></div>
<div class="a" style="left:1082px;top:472px;width:1px;height:14px;background:#d0def0"></div>
<div class="a" style="left:992px;top:472px;width:1px;height:14px;background:#c6d6ec"></div>
<div class="t" style="left:995px;top:476px;color:#1e1e1e">Visible When Value 1</div>
<div class="a" style="left:1083px;top:473px;width:112px;height:12px;background:#fff;border:1px solid #c1d4ec;border-radius:1px;box-shadow:inset 0 1px 0 #dfe8f3"></div>
<div class="a" style="left:979px;top:486px;width:14px;height:14px;background:#deebfa"></div>
<div class="a" style="left:993px;top:499px;width:225px;height:1px;background:#d0def0"></div>
<div class="a" style="left:1082px;top:486px;width:1px;height:14px;background:#d0def0"></div>
<div class="a" style="left:992px;top:486px;width:1px;height:14px;background:#c6d6ec"></div>
<div class="t" style="left:995px;top:490px;color:#1e1e1e">Visible When Field 2</div>
<div class="a" style="left:1083px;top:487px;width:112px;height:12px;background:#fff;border:1px solid #c1d4ec;border-radius:1px;box-shadow:inset 0 1px 0 #dfe8f3"></div>
<svg class="a" style="left:1188px;top:491px" width="6" height="6" viewBox="0 0 6 6"><path d="M0.8 0.8 L5.2 5.2 M5.2 0.8 L0.8 5.2" stroke="#3d5f9e" stroke-width="1"/></svg>
<div class="a" style="left:979px;top:500px;width:14px;height:14px;background:#deebfa"></div>
<div class="a" style="left:993px;top:513px;width:225px;height:1px;background:#d0def0"></div>
<div class="a" style="left:1082px;top:500px;width:1px;height:14px;background:#d0def0"></div>
<div class="a" style="left:992px;top:500px;width:1px;height:14px;background:#c6d6ec"></div>
<div class="t" style="left:995px;top:504px;color:#1e1e1e">Visible When Value 2</div>
<div class="a" style="left:1083px;top:501px;width:112px;height:12px;background:#fff;border:1px solid #c1d4ec;border-radius:1px;box-shadow:inset 0 1px 0 #dfe8f3"></div>
<div class="a" style="left:979px;top:514px;width:14px;height:14px;background:#deebfa"></div>
<div class="a" style="left:993px;top:527px;width:225px;height:1px;background:#d0def0"></div>
<div class="a" style="left:1082px;top:514px;width:1px;height:14px;background:#d0def0"></div>
<div class="a" style="left:992px;top:514px;width:1px;height:14px;background:#c6d6ec"></div>
<div class="t" style="left:995px;top:518px;color:#1e1e1e">Security Substitute</div>
<div class="a" style="left:1083px;top:515px;width:112px;height:12px;background:#fff;border:1px solid #c1d4ec;border-radius:1px;box-shadow:inset 0 1px 0 #dfe8f3"></div>
<svg class="a" style="left:1188px;top:519px" width="6" height="6" viewBox="0 0 6 6"><path d="M0.8 0.8 L5.2 5.2 M5.2 0.8 L0.8 5.2" stroke="#3d5f9e" stroke-width="1"/></svg>
<div class="a" style="left:979px;top:528px;width:239px;height:14px;background:#deebfa;border-bottom:1px solid #c6d9f0"></div>
<svg class="a" style="left:983px;top:535px" width="6" height="4" viewBox="0 0 6 4"><path d="M0.8 3.3 L3 1 L5.2 3.3" stroke="#3a7ad0" stroke-width="1" fill="none"/></svg>
<div class="t b" style="left:993px;top:532px;color:#1a1a1a;letter-spacing:0.05px">Control</div>
<div class="a" style="left:979px;top:542px;width:14px;height:14px;background:#deebfa"></div>
<div class="a" style="left:993px;top:555px;width:225px;height:1px;background:#d0def0"></div>
<div class="a" style="left:1082px;top:542px;width:1px;height:14px;background:#d0def0"></div>
<div class="a" style="left:992px;top:542px;width:1px;height:14px;background:#c6d6ec"></div>
<div class="t" style="left:995px;top:546px;color:#1e1e1e">Control Type</div>
<div class="a" style="left:1083px;top:543px;width:112px;height:12px;background:#e8e8e8;border:1px solid #c1d4ec;border-radius:1px;box-shadow:inset 0 1px 0 #dfe8f3"></div>
<div class="t" style="left:1086px;top:546px;color:#1e1e1e">System.Windows.Controls.ListBox</div>
<div class="a" style="left:979px;top:556px;width:14px;height:14px;background:#deebfa"></div>
<div class="a" style="left:993px;top:569px;width:225px;height:1px;background:#d0def0"></div>
<div class="a" style="left:1082px;top:556px;width:1px;height:14px;background:#d0def0"></div>
<div class="a" style="left:992px;top:556px;width:1px;height:14px;background:#c6d6ec"></div>
<div class="t" style="left:995px;top:560px;color:#1e1e1e">Id</div>
<div class="a" style="left:1083px;top:557px;width:112px;height:12px;background:#e8e8e8;border:1px solid #c1d4ec;border-radius:1px;box-shadow:inset 0 1px 0 #dfe8f3"></div>
<div class="t" style="left:1086px;top:560px;color:#1e1e1e">50183</div>
<div class="a" style="left:979px;top:570px;width:14px;height:14px;background:#deebfa"></div>
<div class="a" style="left:993px;top:583px;width:225px;height:1px;background:#d0def0"></div>
<div class="a" style="left:1082px;top:570px;width:1px;height:14px;background:#d0def0"></div>
<div class="a" style="left:992px;top:570px;width:1px;height:14px;background:#c6d6ec"></div>
<div class="t" style="left:995px;top:574px;color:#1e1e1e">Query</div>
<div class="a" style="left:1083px;top:571px;width:112px;height:12px;background:#fff;border:1px solid #c1d4ec;border-radius:1px;box-shadow:inset 0 1px 0 #dfe8f3"></div>
<svg class="a" style="left:1188px;top:575px" width="6" height="6" viewBox="0 0 6 6"><path d="M0.8 0.8 L5.2 5.2 M5.2 0.8 L0.8 5.2" stroke="#3d5f9e" stroke-width="1"/></svg>
<div class="a" style="left:979px;top:584px;width:14px;height:14px;background:#deebfa"></div>
<div class="a" style="left:993px;top:597px;width:225px;height:1px;background:#d0def0"></div>
<div class="a" style="left:1082px;top:584px;width:1px;height:14px;background:#d0def0"></div>
<div class="a" style="left:992px;top:584px;width:1px;height:14px;background:#c6d6ec"></div>
<div class="t" style="left:995px;top:588px;color:#1e1e1e">Enumeration</div>
<div class="a" style="left:1083px;top:585px;width:112px;height:12px;background:#fff;border:1px solid #c1d4ec;border-radius:1px;box-shadow:inset 0 1px 0 #dfe8f3"></div>
<div class="t" style="left:1086px;top:588px;color:#1e1e1e">KOS - výsledky atestu</div>
<svg class="a" style="left:1188px;top:589px" width="6" height="6" viewBox="0 0 6 6"><path d="M0.8 0.8 L5.2 5.2 M5.2 0.8 L0.8 5.2" stroke="#3d5f9e" stroke-width="1"/></svg>
<div class="t" style="left:1180px;top:589px;color:#555;font-size:5px">▾</div>
<div class="a" style="left:979px;top:598px;width:14px;height:14px;background:#deebfa"></div>
<div class="a" style="left:993px;top:598px;width:225px;height:14px;background:linear-gradient(#fdf8e0,#fff2a6);border:1px solid #f6cf72"></div>
<div class="a" style="left:993px;top:611px;width:225px;height:1px;background:#d0def0"></div>
<div class="a" style="left:1082px;top:598px;width:1px;height:14px;background:#d0def0"></div>
<div class="a" style="left:992px;top:598px;width:1px;height:14px;background:#c6d6ec"></div>
<div class="t" style="left:995px;top:602px;color:#1e1e1e">Style</div>
<div class="a" style="left:1139px;top:599px;width:21px;height:12px;background:linear-gradient(#f4f8fd,#cfe0f6);border:1px solid #b2c9e8;border-radius:2px"></div>
<svg class="a" style="left:1141px;top:601px" width="10" height="8" viewBox="0 0 10 8"><path d="M0.5 7.5 L1 5.5 L6 0.8 L7.5 2.2 L2.5 7 Z" fill="#f0a020" stroke="#9a6010" stroke-width="0.4"/></svg>
<div class="t" style="left:1153px;top:603px;color:#333;font-size:5px">▾</div>
<div class="a" style="left:979px;top:612px;width:239px;height:14px;background:#deebfa;border-bottom:1px solid #c6d9f0"></div>
<svg class="a" style="left:983px;top:619px" width="6" height="4" viewBox="0 0 6 4"><path d="M0.8 3.3 L3 1 L5.2 3.3" stroke="#3a7ad0" stroke-width="1" fill="none"/></svg>
<div class="t b" style="left:993px;top:616px;color:#1a1a1a;letter-spacing:0.05px">Identity</div>
<div class="a" style="left:979px;top:626px;width:14px;height:14px;background:#deebfa"></div>
<div class="a" style="left:993px;top:639px;width:225px;height:1px;background:#d0def0"></div>
<div class="a" style="left:1082px;top:626px;width:1px;height:14px;background:#d0def0"></div>
<div class="a" style="left:992px;top:626px;width:1px;height:14px;background:#c6d6ec"></div>
<div class="t" style="left:995px;top:630px;color:#1e1e1e">Id</div>
<div class="a" style="left:1083px;top:627px;width:112px;height:12px;background:#e8e8e8;border:1px solid #c1d4ec;border-radius:1px;box-shadow:inset 0 1px 0 #dfe8f3"></div>
<div class="t" style="left:1086px;top:630px;color:#1e1e1e">50182</div>
<div class="a" style="left:979px;top:640px;width:14px;height:14px;background:#deebfa"></div>
<div class="a" style="left:993px;top:653px;width:225px;height:1px;background:#d0def0"></div>
<div class="a" style="left:1082px;top:640px;width:1px;height:14px;background:#d0def0"></div>
<div class="a" style="left:992px;top:640px;width:1px;height:14px;background:#c6d6ec"></div>
<div class="t" style="left:995px;top:644px;color:#1e1e1e">Xaml name</div>
<div class="a" style="left:1083px;top:641px;width:112px;height:12px;background:#e8e8e8;border:1px solid #c1d4ec;border-radius:1px;box-shadow:inset 0 1px 0 #dfe8f3"></div>
<div class="t" style="left:1086px;top:644px;color:#1e1e1e">50017_f_50182</div>

<div class="a" style="left:979px;top:670px;width:239px;height:1px;background:#a9c4e6"></div>
<div class="a" style="left:979px;top:671px;width:239px;height:41px;background:#c3dafa"></div>
<div class="t b" style="left:981px;top:675px;color:#111">Field XAML style</div>
<div class="t" style="left:981px;top:689px;color:#1e1e1e">Use this style to describe the style of this field label.</div>
<div class="a" style="left:979px;top:712px;width:239px;height:16px;background:#bcd0e8"></div>
<div class="a" style="left:980px;top:714px;width:65px;height:12px;background:#eef4fb"></div>
<svg class="a" style="left:981px;top:715px" width="10" height="10" viewBox="0 0 10 10"><path d="M1.5 8.5 L6 4" stroke="#3f8fd8" stroke-width="2.2" stroke-linecap="round"/><path d="M5.5 4.5 L7 1.5 C7.5 0.8 9 0.6 9.5 1 L8.3 2.2 L9 3 L9.8 2.3 C9.8 3.5 8.8 4.2 7.5 4 L6.5 5 Z" fill="#b8b8b8"/></svg>
<div class="t" style="left:992px;top:717px;color:#1e1e1e">Property Builder</div>
<svg class="a" style="left:1048px;top:715px" width="10" height="10" viewBox="0 0 10 10"><rect x="0.5" y="1" width="7" height="5.5" rx="2" fill="#fde7a8" stroke="#e0a030" stroke-width="0.6"/><rect x="3" y="3.5" width="6.5" height="5" rx="2" fill="#dcecfa" stroke="#5a9ad8" stroke-width="0.6"/></svg>
<div class="t" style="left:1059px;top:717px;color:#1e1e1e">Diskuse</div>
<svg class="a" style="left:1089px;top:715px" width="9" height="10" viewBox="0 0 9 10"><rect x="0.5" y="0.5" width="8" height="9" fill="#d8dde4" stroke="#7d8a9a" stroke-width="0.6"/><path d="M2 3 H7 M2 5 H7 M2 7 H6" stroke="#7d8a9a" stroke-width="0.5"/></svg>
<div class="t" style="left:1100px;top:717px;color:#1e1e1e">Log</div>
<div class="a" style="left:1219px;top:72px;width:3px;height:673px;background:linear-gradient(90deg,#d5e2f2,#9aa8b8)"></div>
<div class="a" style="left:1204px;top:731px;width:18px;height:14px;background:linear-gradient(#b6c9e4,#8fb0da)"></div>

<!-- status bar -->
<div class="a" style="left:0;top:728px;width:1222px;height:2px;background:#e6eef8"></div>
<div class="a" style="left:0;top:730px;width:1222px;height:1px;background:#9ab6da"></div>
<div class="a" style="left:0;top:731px;width:1222px;height:14px;background:linear-gradient(#dde8f5 0,#d6e3f2 2px,#c6d7ed 4px,#c3d5ec 100%)"></div>
<div class="a" style="left:60px;top:732px;width:1px;height:13px;background:#dbe6f3"></div>
<div class="a" style="left:120px;top:732px;width:1px;height:13px;background:#dbe6f3"></div>
<div class="t" style="left:19px;top:735px;color:#3a5e9a">adam</div>
</body></html>
